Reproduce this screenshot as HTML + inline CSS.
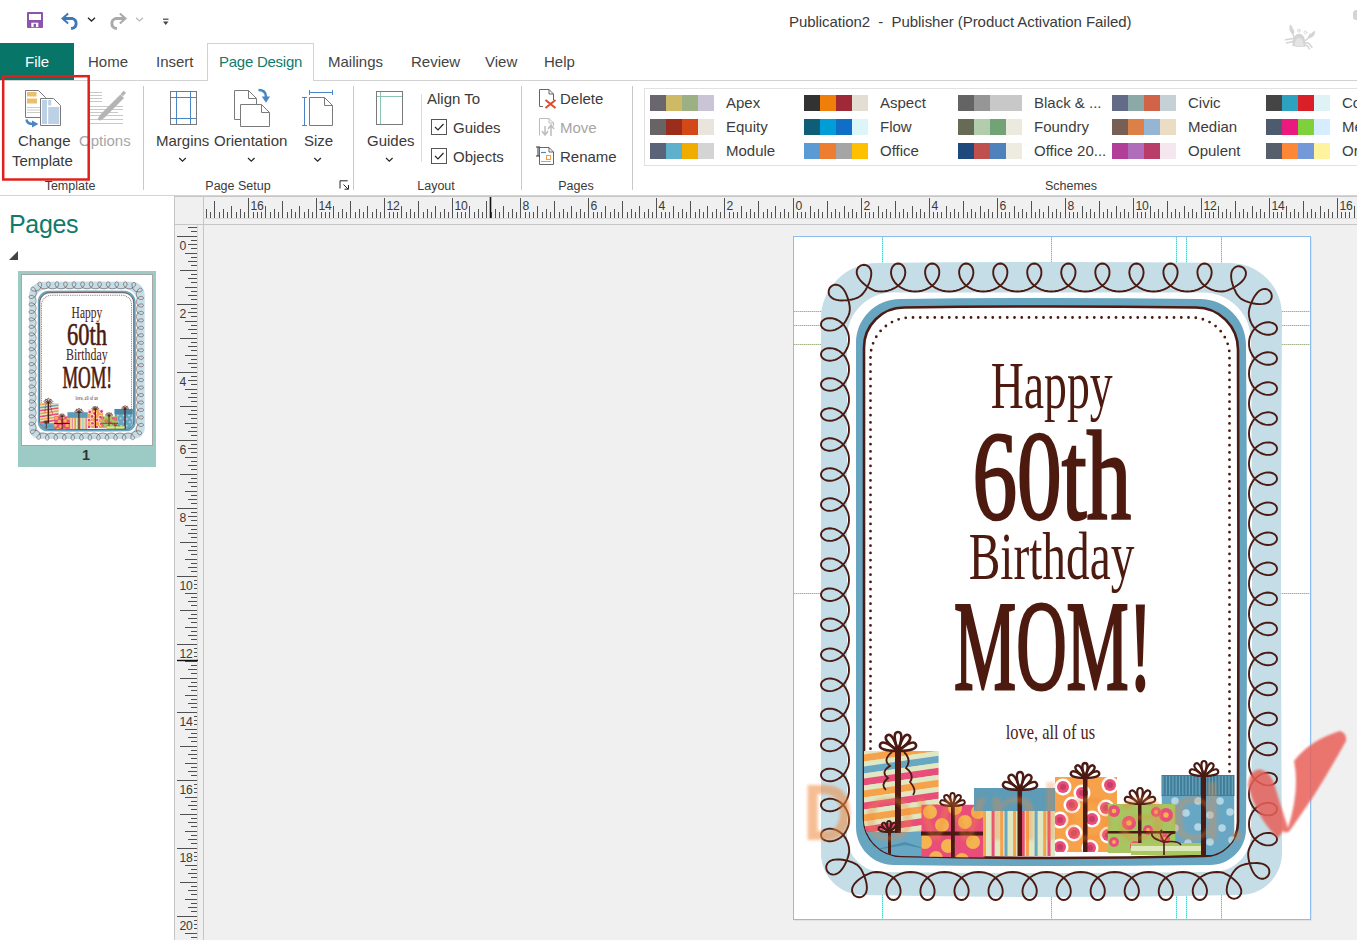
<!DOCTYPE html>
<html><head><meta charset="utf-8">
<style>
*{margin:0;padding:0;box-sizing:border-box}
html,body{width:1357px;height:940px;overflow:hidden;background:#fff;font-family:"Liberation Sans", sans-serif;color:#262626}
.a{position:absolute;white-space:nowrap}
.rb{font-size:15px;color:#3d3d3d}
.gl{font-size:12.5px;color:#3a3a3a}
</style></head><body>

<div class="a" style="left:789px;top:13px;font-size:15px;color:#3a3a3a;letter-spacing:-0.05px">Publication2&nbsp; -&nbsp; Publisher (Product Activation Failed)</div>
<div class="a" style="left:0;top:43px;width:74px;height:37px;background:#077568"></div>
<div class="a" style="left:25px;top:53px;font-size:15px;color:#fff;z-index:3">File</div>
<div class="a" style="left:207px;top:43px;width:107px;height:38px;border:1px solid #d2d2d2;border-bottom:none;background:#fff;z-index:2"></div>
<div class="a" style="left:0;top:80px;width:1357px;height:1px;background:#d2d2d2"></div>
<div class="a" style="left:88px;top:53px;font-size:15px;color:#444;z-index:3">Home</div>
<div class="a" style="left:156px;top:53px;font-size:15px;color:#444;z-index:3">Insert</div>
<div class="a" style="left:219px;top:53px;font-size:15px;color:#0f7b6c;letter-spacing:-0.25px;z-index:3">Page Design</div>
<div class="a" style="left:328px;top:53px;font-size:15px;color:#444;z-index:3">Mailings</div>
<div class="a" style="left:411px;top:53px;font-size:15px;color:#444;z-index:3">Review</div>
<div class="a" style="left:485px;top:53px;font-size:15px;color:#444;z-index:3">View</div>
<div class="a" style="left:544px;top:53px;font-size:15px;color:#444;z-index:3">Help</div>
<div class="a" style="left:0;top:195px;width:1357px;height:1px;background:#d4d4d4"></div>
<div class="a" style="left:143px;top:86px;width:1px;height:104px;background:#c8c8c8"></div>
<div class="a" style="left:353px;top:86px;width:1px;height:104px;background:#c8c8c8"></div>
<div class="a" style="left:521px;top:86px;width:1px;height:104px;background:#c8c8c8"></div>
<div class="a" style="left:632px;top:86px;width:1px;height:104px;background:#c8c8c8"></div>
<div class="a" style="left:421px;top:94px;width:1px;height:68px;background:#dcdcdc"></div>
<div class="a gl" style="left:10px;width:120px;text-align:center;top:179px">Template</div>
<div class="a gl" style="left:178px;width:120px;text-align:center;top:179px">Page Setup</div>
<div class="a gl" style="left:376px;width:120px;text-align:center;top:179px">Layout</div>
<div class="a gl" style="left:516px;width:120px;text-align:center;top:179px">Pages</div>
<div class="a gl" style="left:1011px;width:120px;text-align:center;top:179px">Schemes</div>
<div class="a rb" style="left:18px;top:132px;color:#3a3a3a">Change</div>
<div class="a rb" style="left:12px;top:152px;color:#3a3a3a">Template</div>
<div class="a rb" style="left:79px;top:132px;color:#a6a6a6">Options</div>
<div class="a rb" style="left:156px;top:132px;color:#3a3a3a">Margins</div>
<div class="a rb" style="left:214px;top:132px;color:#3a3a3a">Orientation</div>
<div class="a rb" style="left:304px;top:132px;color:#3a3a3a">Size</div>
<div class="a rb" style="left:367px;top:132px;color:#3a3a3a">Guides</div>
<div class="a rb" style="left:427px;top:90px;color:#3a3a3a">Align To</div>
<div class="a rb" style="left:453px;top:119px;color:#3a3a3a">Guides</div>
<div class="a rb" style="left:453px;top:148px;color:#3a3a3a">Objects</div>
<div class="a rb" style="left:560px;top:90px;color:#3a3a3a">Delete</div>
<div class="a rb" style="left:560px;top:119px;color:#a6a6a6">Move</div>
<div class="a rb" style="left:560px;top:148px;color:#3a3a3a">Rename</div>
<div class="a" style="left:644px;top:88px;width:720px;height:78px;border:1px solid #e1e1e1;background:#fff"></div>
<div class="a" style="left:650px;top:95px;width:16px;height:16px;background:#69676d"></div>
<div class="a" style="left:666px;top:95px;width:16px;height:16px;background:#ceb966"></div>
<div class="a" style="left:682px;top:95px;width:16px;height:16px;background:#9cb084"></div>
<div class="a" style="left:698px;top:95px;width:16px;height:16px;background:#c9c4d6"></div>
<div class="a rb" style="left:726px;top:94px">Apex</div>
<div class="a" style="left:650px;top:119px;width:16px;height:16px;background:#696464"></div>
<div class="a" style="left:666px;top:119px;width:16px;height:16px;background:#9b2d1f"></div>
<div class="a" style="left:682px;top:119px;width:16px;height:16px;background:#d34817"></div>
<div class="a" style="left:698px;top:119px;width:16px;height:16px;background:#e9e5dc"></div>
<div class="a rb" style="left:726px;top:118px">Equity</div>
<div class="a" style="left:650px;top:143px;width:16px;height:16px;background:#5a6378"></div>
<div class="a" style="left:666px;top:143px;width:16px;height:16px;background:#5eb0cc"></div>
<div class="a" style="left:682px;top:143px;width:16px;height:16px;background:#f0ad00"></div>
<div class="a" style="left:698px;top:143px;width:16px;height:16px;background:#d4d4d4"></div>
<div class="a rb" style="left:726px;top:142px">Module</div>
<div class="a" style="left:804px;top:95px;width:16px;height:16px;background:#323232"></div>
<div class="a" style="left:820px;top:95px;width:16px;height:16px;background:#f07f09"></div>
<div class="a" style="left:836px;top:95px;width:16px;height:16px;background:#9f2936"></div>
<div class="a" style="left:852px;top:95px;width:16px;height:16px;background:#e3ded1"></div>
<div class="a rb" style="left:880px;top:94px">Aspect</div>
<div class="a" style="left:804px;top:119px;width:16px;height:16px;background:#0f5e78"></div>
<div class="a" style="left:820px;top:119px;width:16px;height:16px;background:#009dd9"></div>
<div class="a" style="left:836px;top:119px;width:16px;height:16px;background:#0f6fc6"></div>
<div class="a" style="left:852px;top:119px;width:16px;height:16px;background:#dbf5f9"></div>
<div class="a rb" style="left:880px;top:118px">Flow</div>
<div class="a" style="left:804px;top:143px;width:16px;height:16px;background:#5b9bd5"></div>
<div class="a" style="left:820px;top:143px;width:16px;height:16px;background:#ed7d31"></div>
<div class="a" style="left:836px;top:143px;width:16px;height:16px;background:#a5a5a5"></div>
<div class="a" style="left:852px;top:143px;width:16px;height:16px;background:#ffc000"></div>
<div class="a rb" style="left:880px;top:142px">Office</div>
<div class="a" style="left:958px;top:95px;width:16px;height:16px;background:#646464"></div>
<div class="a" style="left:974px;top:95px;width:16px;height:16px;background:#969696"></div>
<div class="a" style="left:990px;top:95px;width:16px;height:16px;background:#c8c8c8"></div>
<div class="a" style="left:1006px;top:95px;width:16px;height:16px;background:#c8c8c8"></div>
<div class="a rb" style="left:1034px;top:94px">Black &amp; ...</div>
<div class="a" style="left:958px;top:119px;width:16px;height:16px;background:#676a55"></div>
<div class="a" style="left:974px;top:119px;width:16px;height:16px;background:#b1cdae"></div>
<div class="a" style="left:990px;top:119px;width:16px;height:16px;background:#72a376"></div>
<div class="a" style="left:1006px;top:119px;width:16px;height:16px;background:#eaebde"></div>
<div class="a rb" style="left:1034px;top:118px">Foundry</div>
<div class="a" style="left:958px;top:143px;width:16px;height:16px;background:#1f497d"></div>
<div class="a" style="left:974px;top:143px;width:16px;height:16px;background:#c0504d"></div>
<div class="a" style="left:990px;top:143px;width:16px;height:16px;background:#4f81bd"></div>
<div class="a" style="left:1006px;top:143px;width:16px;height:16px;background:#eeece1"></div>
<div class="a rb" style="left:1034px;top:142px">Office 20...</div>
<div class="a" style="left:1112px;top:95px;width:16px;height:16px;background:#646b86"></div>
<div class="a" style="left:1128px;top:95px;width:16px;height:16px;background:#8ba9a7"></div>
<div class="a" style="left:1144px;top:95px;width:16px;height:16px;background:#d16349"></div>
<div class="a" style="left:1160px;top:95px;width:16px;height:16px;background:#c5d1d7"></div>
<div class="a rb" style="left:1188px;top:94px">Civic</div>
<div class="a" style="left:1112px;top:119px;width:16px;height:16px;background:#775f55"></div>
<div class="a" style="left:1128px;top:119px;width:16px;height:16px;background:#dd8047"></div>
<div class="a" style="left:1144px;top:119px;width:16px;height:16px;background:#94b6d2"></div>
<div class="a" style="left:1160px;top:119px;width:16px;height:16px;background:#ebddc3"></div>
<div class="a rb" style="left:1188px;top:118px">Median</div>
<div class="a" style="left:1112px;top:143px;width:16px;height:16px;background:#b13f9a"></div>
<div class="a" style="left:1128px;top:143px;width:16px;height:16px;background:#b06dba"></div>
<div class="a" style="left:1144px;top:143px;width:16px;height:16px;background:#b83d68"></div>
<div class="a" style="left:1160px;top:143px;width:16px;height:16px;background:#f4e7ed"></div>
<div class="a rb" style="left:1188px;top:142px">Opulent</div>
<div class="a" style="left:1266px;top:95px;width:16px;height:16px;background:#454545"></div>
<div class="a" style="left:1282px;top:95px;width:16px;height:16px;background:#2da2bf"></div>
<div class="a" style="left:1298px;top:95px;width:16px;height:16px;background:#da1f28"></div>
<div class="a" style="left:1314px;top:95px;width:16px;height:16px;background:#dff3f6"></div>
<div class="a rb" style="left:1342px;top:94px">Concourse</div>
<div class="a" style="left:1266px;top:119px;width:16px;height:16px;background:#4e5b6f"></div>
<div class="a" style="left:1282px;top:119px;width:16px;height:16px;background:#eb1a7f"></div>
<div class="a" style="left:1298px;top:119px;width:16px;height:16px;background:#7fd13b"></div>
<div class="a" style="left:1314px;top:119px;width:16px;height:16px;background:#d6ecff"></div>
<div class="a rb" style="left:1342px;top:118px">Metro</div>
<div class="a" style="left:1266px;top:143px;width:16px;height:16px;background:#575f6d"></div>
<div class="a" style="left:1282px;top:143px;width:16px;height:16px;background:#fe8637"></div>
<div class="a" style="left:1298px;top:143px;width:16px;height:16px;background:#7598d9"></div>
<div class="a" style="left:1314px;top:143px;width:16px;height:16px;background:#fff39d"></div>
<div class="a rb" style="left:1342px;top:142px">Oriel</div>
<div class="a" style="left:9px;top:210px;font-size:25px;letter-spacing:-0.35px;color:#0f7b6c">Pages</div>
<div class="a" style="left:174px;top:196px;width:1183px;height:744px;background:#f0f0f0"></div>
<svg class="a" style="left:0;top:0" width="1357" height="940" viewBox="0 0 1357 940"><g stroke="#c6c6c6" stroke-width="1" fill="none"><line x1="174.5" y1="196" x2="174.5" y2="940"/><line x1="175" y1="196.5" x2="1357" y2="196.5"/><line x1="203.5" y1="196" x2="203.5" y2="940"/><line x1="175" y1="224.5" x2="1357" y2="224.5"/><line x1="204" y1="218.5" x2="1357" y2="218.5" stroke="#d8d8d8"/><line x1="197.5" y1="225" x2="197.5" y2="940" stroke="#d8d8d8"/></g><g stroke="#505050" stroke-width="1"><line x1="206.5" y1="209" x2="206.5" y2="218" /><line x1="210.5" y1="212" x2="210.5" y2="218" /><line x1="214.5" y1="201" x2="214.5" y2="218" /><line x1="219.5" y1="212" x2="219.5" y2="218" /><line x1="223.5" y1="209" x2="223.5" y2="218" /><line x1="227.5" y1="212" x2="227.5" y2="218" /><line x1="231.5" y1="206" x2="231.5" y2="218" /><line x1="236.5" y1="212" x2="236.5" y2="218" /><line x1="240.5" y1="209" x2="240.5" y2="218" /><line x1="244.5" y1="212" x2="244.5" y2="218" /><line x1="248.5" y1="198" x2="248.5" y2="218" /><line x1="253.5" y1="212" x2="253.5" y2="218" /><line x1="257.5" y1="212" x2="257.5" y2="218" /><line x1="261.5" y1="212" x2="261.5" y2="218" /><line x1="265.5" y1="206" x2="265.5" y2="218" /><line x1="270.5" y1="212" x2="270.5" y2="218" /><line x1="274.5" y1="209" x2="274.5" y2="218" /><line x1="278.5" y1="212" x2="278.5" y2="218" /><line x1="282.5" y1="201" x2="282.5" y2="218" /><line x1="287.5" y1="212" x2="287.5" y2="218" /><line x1="291.5" y1="209" x2="291.5" y2="218" /><line x1="295.5" y1="212" x2="295.5" y2="218" /><line x1="299.5" y1="206" x2="299.5" y2="218" /><line x1="304.5" y1="212" x2="304.5" y2="218" /><line x1="308.5" y1="209" x2="308.5" y2="218" /><line x1="312.5" y1="212" x2="312.5" y2="218" /><line x1="316.5" y1="198" x2="316.5" y2="218" /><line x1="321.5" y1="212" x2="321.5" y2="218" /><line x1="325.5" y1="212" x2="325.5" y2="218" /><line x1="329.5" y1="212" x2="329.5" y2="218" /><line x1="333.5" y1="206" x2="333.5" y2="218" /><line x1="338.5" y1="212" x2="338.5" y2="218" /><line x1="342.5" y1="209" x2="342.5" y2="218" /><line x1="346.5" y1="212" x2="346.5" y2="218" /><line x1="350.5" y1="201" x2="350.5" y2="218" /><line x1="355.5" y1="212" x2="355.5" y2="218" /><line x1="359.5" y1="209" x2="359.5" y2="218" /><line x1="363.5" y1="212" x2="363.5" y2="218" /><line x1="367.5" y1="206" x2="367.5" y2="218" /><line x1="372.5" y1="212" x2="372.5" y2="218" /><line x1="376.5" y1="209" x2="376.5" y2="218" /><line x1="380.5" y1="212" x2="380.5" y2="218" /><line x1="384.5" y1="198" x2="384.5" y2="218" /><line x1="389.5" y1="212" x2="389.5" y2="218" /><line x1="393.5" y1="212" x2="393.5" y2="218" /><line x1="397.5" y1="212" x2="397.5" y2="218" /><line x1="401.5" y1="206" x2="401.5" y2="218" /><line x1="406.5" y1="212" x2="406.5" y2="218" /><line x1="410.5" y1="209" x2="410.5" y2="218" /><line x1="414.5" y1="212" x2="414.5" y2="218" /><line x1="418.5" y1="201" x2="418.5" y2="218" /><line x1="423.5" y1="212" x2="423.5" y2="218" /><line x1="427.5" y1="209" x2="427.5" y2="218" /><line x1="431.5" y1="212" x2="431.5" y2="218" /><line x1="435.5" y1="206" x2="435.5" y2="218" /><line x1="440.5" y1="212" x2="440.5" y2="218" /><line x1="444.5" y1="209" x2="444.5" y2="218" /><line x1="448.5" y1="212" x2="448.5" y2="218" /><line x1="452.5" y1="198" x2="452.5" y2="218" /><line x1="457.5" y1="212" x2="457.5" y2="218" /><line x1="461.5" y1="212" x2="461.5" y2="218" /><line x1="465.5" y1="212" x2="465.5" y2="218" /><line x1="469.5" y1="206" x2="469.5" y2="218" /><line x1="474.5" y1="212" x2="474.5" y2="218" /><line x1="478.5" y1="209" x2="478.5" y2="218" /><line x1="482.5" y1="212" x2="482.5" y2="218" /><line x1="486.5" y1="201" x2="486.5" y2="218" /><line x1="491.5" y1="212" x2="491.5" y2="218" /><line x1="495.5" y1="209" x2="495.5" y2="218" /><line x1="499.5" y1="212" x2="499.5" y2="218" /><line x1="503.5" y1="206" x2="503.5" y2="218" /><line x1="508.5" y1="212" x2="508.5" y2="218" /><line x1="512.5" y1="209" x2="512.5" y2="218" /><line x1="516.5" y1="212" x2="516.5" y2="218" /><line x1="520.5" y1="198" x2="520.5" y2="218" /><line x1="525.5" y1="212" x2="525.5" y2="218" /><line x1="529.5" y1="212" x2="529.5" y2="218" /><line x1="533.5" y1="212" x2="533.5" y2="218" /><line x1="537.5" y1="206" x2="537.5" y2="218" /><line x1="542.5" y1="212" x2="542.5" y2="218" /><line x1="546.5" y1="209" x2="546.5" y2="218" /><line x1="550.5" y1="212" x2="550.5" y2="218" /><line x1="554.5" y1="201" x2="554.5" y2="218" /><line x1="559.5" y1="212" x2="559.5" y2="218" /><line x1="563.5" y1="209" x2="563.5" y2="218" /><line x1="567.5" y1="212" x2="567.5" y2="218" /><line x1="571.5" y1="206" x2="571.5" y2="218" /><line x1="576.5" y1="212" x2="576.5" y2="218" /><line x1="580.5" y1="209" x2="580.5" y2="218" /><line x1="584.5" y1="212" x2="584.5" y2="218" /><line x1="588.5" y1="198" x2="588.5" y2="218" /><line x1="593.5" y1="212" x2="593.5" y2="218" /><line x1="597.5" y1="212" x2="597.5" y2="218" /><line x1="601.5" y1="212" x2="601.5" y2="218" /><line x1="605.5" y1="206" x2="605.5" y2="218" /><line x1="610.5" y1="212" x2="610.5" y2="218" /><line x1="614.5" y1="209" x2="614.5" y2="218" /><line x1="618.5" y1="212" x2="618.5" y2="218" /><line x1="622.5" y1="201" x2="622.5" y2="218" /><line x1="627.5" y1="212" x2="627.5" y2="218" /><line x1="631.5" y1="209" x2="631.5" y2="218" /><line x1="635.5" y1="212" x2="635.5" y2="218" /><line x1="639.5" y1="206" x2="639.5" y2="218" /><line x1="644.5" y1="212" x2="644.5" y2="218" /><line x1="648.5" y1="209" x2="648.5" y2="218" /><line x1="652.5" y1="212" x2="652.5" y2="218" /><line x1="656.5" y1="198" x2="656.5" y2="218" /><line x1="661.5" y1="212" x2="661.5" y2="218" /><line x1="665.5" y1="212" x2="665.5" y2="218" /><line x1="669.5" y1="212" x2="669.5" y2="218" /><line x1="673.5" y1="206" x2="673.5" y2="218" /><line x1="678.5" y1="212" x2="678.5" y2="218" /><line x1="682.5" y1="209" x2="682.5" y2="218" /><line x1="686.5" y1="212" x2="686.5" y2="218" /><line x1="690.5" y1="201" x2="690.5" y2="218" /><line x1="695.5" y1="212" x2="695.5" y2="218" /><line x1="699.5" y1="209" x2="699.5" y2="218" /><line x1="703.5" y1="212" x2="703.5" y2="218" /><line x1="707.5" y1="206" x2="707.5" y2="218" /><line x1="712.5" y1="212" x2="712.5" y2="218" /><line x1="716.5" y1="209" x2="716.5" y2="218" /><line x1="720.5" y1="212" x2="720.5" y2="218" /><line x1="724.5" y1="198" x2="724.5" y2="218" /><line x1="729.5" y1="212" x2="729.5" y2="218" /><line x1="733.5" y1="212" x2="733.5" y2="218" /><line x1="737.5" y1="212" x2="737.5" y2="218" /><line x1="741.5" y1="206" x2="741.5" y2="218" /><line x1="746.5" y1="212" x2="746.5" y2="218" /><line x1="750.5" y1="209" x2="750.5" y2="218" /><line x1="754.5" y1="212" x2="754.5" y2="218" /><line x1="758.5" y1="201" x2="758.5" y2="218" /><line x1="763.5" y1="212" x2="763.5" y2="218" /><line x1="767.5" y1="209" x2="767.5" y2="218" /><line x1="771.5" y1="212" x2="771.5" y2="218" /><line x1="775.5" y1="206" x2="775.5" y2="218" /><line x1="780.5" y1="212" x2="780.5" y2="218" /><line x1="784.5" y1="209" x2="784.5" y2="218" /><line x1="788.5" y1="212" x2="788.5" y2="218" /><line x1="793.5" y1="198" x2="793.5" y2="218" /><line x1="797.5" y1="212" x2="797.5" y2="218" /><line x1="801.5" y1="212" x2="801.5" y2="218" /><line x1="805.5" y1="212" x2="805.5" y2="218" /><line x1="810.5" y1="206" x2="810.5" y2="218" /><line x1="814.5" y1="212" x2="814.5" y2="218" /><line x1="818.5" y1="209" x2="818.5" y2="218" /><line x1="822.5" y1="212" x2="822.5" y2="218" /><line x1="827.5" y1="201" x2="827.5" y2="218" /><line x1="831.5" y1="212" x2="831.5" y2="218" /><line x1="835.5" y1="209" x2="835.5" y2="218" /><line x1="839.5" y1="212" x2="839.5" y2="218" /><line x1="844.5" y1="206" x2="844.5" y2="218" /><line x1="848.5" y1="212" x2="848.5" y2="218" /><line x1="852.5" y1="209" x2="852.5" y2="218" /><line x1="856.5" y1="212" x2="856.5" y2="218" /><line x1="861.5" y1="198" x2="861.5" y2="218" /><line x1="865.5" y1="212" x2="865.5" y2="218" /><line x1="869.5" y1="212" x2="869.5" y2="218" /><line x1="873.5" y1="212" x2="873.5" y2="218" /><line x1="878.5" y1="206" x2="878.5" y2="218" /><line x1="882.5" y1="212" x2="882.5" y2="218" /><line x1="886.5" y1="209" x2="886.5" y2="218" /><line x1="890.5" y1="212" x2="890.5" y2="218" /><line x1="895.5" y1="201" x2="895.5" y2="218" /><line x1="899.5" y1="212" x2="899.5" y2="218" /><line x1="903.5" y1="209" x2="903.5" y2="218" /><line x1="907.5" y1="212" x2="907.5" y2="218" /><line x1="912.5" y1="206" x2="912.5" y2="218" /><line x1="916.5" y1="212" x2="916.5" y2="218" /><line x1="920.5" y1="209" x2="920.5" y2="218" /><line x1="924.5" y1="212" x2="924.5" y2="218" /><line x1="929.5" y1="198" x2="929.5" y2="218" /><line x1="933.5" y1="212" x2="933.5" y2="218" /><line x1="937.5" y1="212" x2="937.5" y2="218" /><line x1="941.5" y1="212" x2="941.5" y2="218" /><line x1="946.5" y1="206" x2="946.5" y2="218" /><line x1="950.5" y1="212" x2="950.5" y2="218" /><line x1="954.5" y1="209" x2="954.5" y2="218" /><line x1="958.5" y1="212" x2="958.5" y2="218" /><line x1="963.5" y1="201" x2="963.5" y2="218" /><line x1="967.5" y1="212" x2="967.5" y2="218" /><line x1="971.5" y1="209" x2="971.5" y2="218" /><line x1="975.5" y1="212" x2="975.5" y2="218" /><line x1="980.5" y1="206" x2="980.5" y2="218" /><line x1="984.5" y1="212" x2="984.5" y2="218" /><line x1="988.5" y1="209" x2="988.5" y2="218" /><line x1="992.5" y1="212" x2="992.5" y2="218" /><line x1="997.5" y1="198" x2="997.5" y2="218" /><line x1="1001.5" y1="212" x2="1001.5" y2="218" /><line x1="1005.5" y1="212" x2="1005.5" y2="218" /><line x1="1009.5" y1="212" x2="1009.5" y2="218" /><line x1="1014.5" y1="206" x2="1014.5" y2="218" /><line x1="1018.5" y1="212" x2="1018.5" y2="218" /><line x1="1022.5" y1="209" x2="1022.5" y2="218" /><line x1="1026.5" y1="212" x2="1026.5" y2="218" /><line x1="1031.5" y1="201" x2="1031.5" y2="218" /><line x1="1035.5" y1="212" x2="1035.5" y2="218" /><line x1="1039.5" y1="209" x2="1039.5" y2="218" /><line x1="1043.5" y1="212" x2="1043.5" y2="218" /><line x1="1048.5" y1="206" x2="1048.5" y2="218" /><line x1="1052.5" y1="212" x2="1052.5" y2="218" /><line x1="1056.5" y1="209" x2="1056.5" y2="218" /><line x1="1060.5" y1="212" x2="1060.5" y2="218" /><line x1="1065.5" y1="198" x2="1065.5" y2="218" /><line x1="1069.5" y1="212" x2="1069.5" y2="218" /><line x1="1073.5" y1="212" x2="1073.5" y2="218" /><line x1="1077.5" y1="212" x2="1077.5" y2="218" /><line x1="1082.5" y1="206" x2="1082.5" y2="218" /><line x1="1086.5" y1="212" x2="1086.5" y2="218" /><line x1="1090.5" y1="209" x2="1090.5" y2="218" /><line x1="1094.5" y1="212" x2="1094.5" y2="218" /><line x1="1099.5" y1="201" x2="1099.5" y2="218" /><line x1="1103.5" y1="212" x2="1103.5" y2="218" /><line x1="1107.5" y1="209" x2="1107.5" y2="218" /><line x1="1111.5" y1="212" x2="1111.5" y2="218" /><line x1="1116.5" y1="206" x2="1116.5" y2="218" /><line x1="1120.5" y1="212" x2="1120.5" y2="218" /><line x1="1124.5" y1="209" x2="1124.5" y2="218" /><line x1="1128.5" y1="212" x2="1128.5" y2="218" /><line x1="1133.5" y1="198" x2="1133.5" y2="218" /><line x1="1137.5" y1="212" x2="1137.5" y2="218" /><line x1="1141.5" y1="212" x2="1141.5" y2="218" /><line x1="1145.5" y1="212" x2="1145.5" y2="218" /><line x1="1150.5" y1="206" x2="1150.5" y2="218" /><line x1="1154.5" y1="212" x2="1154.5" y2="218" /><line x1="1158.5" y1="209" x2="1158.5" y2="218" /><line x1="1162.5" y1="212" x2="1162.5" y2="218" /><line x1="1167.5" y1="201" x2="1167.5" y2="218" /><line x1="1171.5" y1="212" x2="1171.5" y2="218" /><line x1="1175.5" y1="209" x2="1175.5" y2="218" /><line x1="1179.5" y1="212" x2="1179.5" y2="218" /><line x1="1184.5" y1="206" x2="1184.5" y2="218" /><line x1="1188.5" y1="212" x2="1188.5" y2="218" /><line x1="1192.5" y1="209" x2="1192.5" y2="218" /><line x1="1196.5" y1="212" x2="1196.5" y2="218" /><line x1="1201.5" y1="198" x2="1201.5" y2="218" /><line x1="1205.5" y1="212" x2="1205.5" y2="218" /><line x1="1209.5" y1="212" x2="1209.5" y2="218" /><line x1="1213.5" y1="212" x2="1213.5" y2="218" /><line x1="1218.5" y1="206" x2="1218.5" y2="218" /><line x1="1222.5" y1="212" x2="1222.5" y2="218" /><line x1="1226.5" y1="209" x2="1226.5" y2="218" /><line x1="1230.5" y1="212" x2="1230.5" y2="218" /><line x1="1235.5" y1="201" x2="1235.5" y2="218" /><line x1="1239.5" y1="212" x2="1239.5" y2="218" /><line x1="1243.5" y1="209" x2="1243.5" y2="218" /><line x1="1247.5" y1="212" x2="1247.5" y2="218" /><line x1="1252.5" y1="206" x2="1252.5" y2="218" /><line x1="1256.5" y1="212" x2="1256.5" y2="218" /><line x1="1260.5" y1="209" x2="1260.5" y2="218" /><line x1="1264.5" y1="212" x2="1264.5" y2="218" /><line x1="1269.5" y1="198" x2="1269.5" y2="218" /><line x1="1273.5" y1="212" x2="1273.5" y2="218" /><line x1="1277.5" y1="212" x2="1277.5" y2="218" /><line x1="1281.5" y1="212" x2="1281.5" y2="218" /><line x1="1286.5" y1="206" x2="1286.5" y2="218" /><line x1="1290.5" y1="212" x2="1290.5" y2="218" /><line x1="1294.5" y1="209" x2="1294.5" y2="218" /><line x1="1298.5" y1="212" x2="1298.5" y2="218" /><line x1="1303.5" y1="201" x2="1303.5" y2="218" /><line x1="1307.5" y1="212" x2="1307.5" y2="218" /><line x1="1311.5" y1="209" x2="1311.5" y2="218" /><line x1="1315.5" y1="212" x2="1315.5" y2="218" /><line x1="1320.5" y1="206" x2="1320.5" y2="218" /><line x1="1324.5" y1="212" x2="1324.5" y2="218" /><line x1="1328.5" y1="209" x2="1328.5" y2="218" /><line x1="1332.5" y1="212" x2="1332.5" y2="218" /><line x1="1337.5" y1="198" x2="1337.5" y2="218" /><line x1="1341.5" y1="212" x2="1341.5" y2="218" /><line x1="1345.5" y1="212" x2="1345.5" y2="218" /><line x1="1349.5" y1="212" x2="1349.5" y2="218" /><line x1="1354.5" y1="206" x2="1354.5" y2="218" /><line x1="188" y1="227.5" x2="197" y2="227.5" /><line x1="191" y1="231.5" x2="197" y2="231.5" /><line x1="177" y1="236.5" x2="197" y2="236.5" /><line x1="191" y1="240.5" x2="197" y2="240.5" /><line x1="188" y1="244.5" x2="197" y2="244.5" /><line x1="191" y1="248.5" x2="197" y2="248.5" /><line x1="185" y1="253.5" x2="197" y2="253.5" /><line x1="191" y1="257.5" x2="197" y2="257.5" /><line x1="188" y1="261.5" x2="197" y2="261.5" /><line x1="191" y1="265.5" x2="197" y2="265.5" /><line x1="180" y1="270.5" x2="197" y2="270.5" /><line x1="191" y1="274.5" x2="197" y2="274.5" /><line x1="188" y1="278.5" x2="197" y2="278.5" /><line x1="191" y1="282.5" x2="197" y2="282.5" /><line x1="185" y1="287.5" x2="197" y2="287.5" /><line x1="191" y1="291.5" x2="197" y2="291.5" /><line x1="188" y1="295.5" x2="197" y2="295.5" /><line x1="191" y1="299.5" x2="197" y2="299.5" /><line x1="177" y1="304.5" x2="197" y2="304.5" /><line x1="191" y1="308.5" x2="197" y2="308.5" /><line x1="188" y1="312.5" x2="197" y2="312.5" /><line x1="191" y1="316.5" x2="197" y2="316.5" /><line x1="185" y1="321.5" x2="197" y2="321.5" /><line x1="191" y1="325.5" x2="197" y2="325.5" /><line x1="188" y1="329.5" x2="197" y2="329.5" /><line x1="191" y1="333.5" x2="197" y2="333.5" /><line x1="180" y1="338.5" x2="197" y2="338.5" /><line x1="191" y1="342.5" x2="197" y2="342.5" /><line x1="188" y1="346.5" x2="197" y2="346.5" /><line x1="191" y1="350.5" x2="197" y2="350.5" /><line x1="185" y1="355.5" x2="197" y2="355.5" /><line x1="191" y1="359.5" x2="197" y2="359.5" /><line x1="188" y1="363.5" x2="197" y2="363.5" /><line x1="191" y1="367.5" x2="197" y2="367.5" /><line x1="177" y1="372.5" x2="197" y2="372.5" /><line x1="191" y1="376.5" x2="197" y2="376.5" /><line x1="188" y1="380.5" x2="197" y2="380.5" /><line x1="191" y1="384.5" x2="197" y2="384.5" /><line x1="185" y1="389.5" x2="197" y2="389.5" /><line x1="191" y1="393.5" x2="197" y2="393.5" /><line x1="188" y1="397.5" x2="197" y2="397.5" /><line x1="191" y1="401.5" x2="197" y2="401.5" /><line x1="180" y1="406.5" x2="197" y2="406.5" /><line x1="191" y1="410.5" x2="197" y2="410.5" /><line x1="188" y1="414.5" x2="197" y2="414.5" /><line x1="191" y1="418.5" x2="197" y2="418.5" /><line x1="185" y1="423.5" x2="197" y2="423.5" /><line x1="191" y1="427.5" x2="197" y2="427.5" /><line x1="188" y1="431.5" x2="197" y2="431.5" /><line x1="191" y1="435.5" x2="197" y2="435.5" /><line x1="177" y1="440.5" x2="197" y2="440.5" /><line x1="191" y1="444.5" x2="197" y2="444.5" /><line x1="188" y1="448.5" x2="197" y2="448.5" /><line x1="191" y1="452.5" x2="197" y2="452.5" /><line x1="185" y1="457.5" x2="197" y2="457.5" /><line x1="191" y1="461.5" x2="197" y2="461.5" /><line x1="188" y1="465.5" x2="197" y2="465.5" /><line x1="191" y1="469.5" x2="197" y2="469.5" /><line x1="180" y1="474.5" x2="197" y2="474.5" /><line x1="191" y1="478.5" x2="197" y2="478.5" /><line x1="188" y1="482.5" x2="197" y2="482.5" /><line x1="191" y1="486.5" x2="197" y2="486.5" /><line x1="185" y1="491.5" x2="197" y2="491.5" /><line x1="191" y1="495.5" x2="197" y2="495.5" /><line x1="188" y1="499.5" x2="197" y2="499.5" /><line x1="191" y1="503.5" x2="197" y2="503.5" /><line x1="177" y1="508.5" x2="197" y2="508.5" /><line x1="191" y1="512.5" x2="197" y2="512.5" /><line x1="188" y1="516.5" x2="197" y2="516.5" /><line x1="191" y1="520.5" x2="197" y2="520.5" /><line x1="185" y1="525.5" x2="197" y2="525.5" /><line x1="191" y1="529.5" x2="197" y2="529.5" /><line x1="188" y1="533.5" x2="197" y2="533.5" /><line x1="191" y1="537.5" x2="197" y2="537.5" /><line x1="180" y1="542.5" x2="197" y2="542.5" /><line x1="191" y1="546.5" x2="197" y2="546.5" /><line x1="188" y1="550.5" x2="197" y2="550.5" /><line x1="191" y1="554.5" x2="197" y2="554.5" /><line x1="185" y1="559.5" x2="197" y2="559.5" /><line x1="191" y1="563.5" x2="197" y2="563.5" /><line x1="188" y1="567.5" x2="197" y2="567.5" /><line x1="191" y1="571.5" x2="197" y2="571.5" /><line x1="177" y1="576.5" x2="197" y2="576.5" /><line x1="194" y1="580.5" x2="197" y2="580.5" /><line x1="194" y1="584.5" x2="197" y2="584.5" /><line x1="194" y1="588.5" x2="197" y2="588.5" /><line x1="185" y1="593.5" x2="197" y2="593.5" /><line x1="191" y1="597.5" x2="197" y2="597.5" /><line x1="188" y1="601.5" x2="197" y2="601.5" /><line x1="191" y1="605.5" x2="197" y2="605.5" /><line x1="180" y1="610.5" x2="197" y2="610.5" /><line x1="191" y1="614.5" x2="197" y2="614.5" /><line x1="188" y1="618.5" x2="197" y2="618.5" /><line x1="191" y1="622.5" x2="197" y2="622.5" /><line x1="185" y1="627.5" x2="197" y2="627.5" /><line x1="191" y1="631.5" x2="197" y2="631.5" /><line x1="188" y1="635.5" x2="197" y2="635.5" /><line x1="191" y1="639.5" x2="197" y2="639.5" /><line x1="177" y1="644.5" x2="197" y2="644.5" /><line x1="194" y1="648.5" x2="197" y2="648.5" /><line x1="194" y1="652.5" x2="197" y2="652.5" /><line x1="194" y1="656.5" x2="197" y2="656.5" /><line x1="185" y1="661.5" x2="197" y2="661.5" /><line x1="191" y1="665.5" x2="197" y2="665.5" /><line x1="188" y1="669.5" x2="197" y2="669.5" /><line x1="191" y1="673.5" x2="197" y2="673.5" /><line x1="180" y1="678.5" x2="197" y2="678.5" /><line x1="191" y1="682.5" x2="197" y2="682.5" /><line x1="188" y1="686.5" x2="197" y2="686.5" /><line x1="191" y1="690.5" x2="197" y2="690.5" /><line x1="185" y1="695.5" x2="197" y2="695.5" /><line x1="191" y1="699.5" x2="197" y2="699.5" /><line x1="188" y1="703.5" x2="197" y2="703.5" /><line x1="191" y1="707.5" x2="197" y2="707.5" /><line x1="177" y1="712.5" x2="197" y2="712.5" /><line x1="194" y1="716.5" x2="197" y2="716.5" /><line x1="194" y1="720.5" x2="197" y2="720.5" /><line x1="194" y1="724.5" x2="197" y2="724.5" /><line x1="185" y1="729.5" x2="197" y2="729.5" /><line x1="191" y1="733.5" x2="197" y2="733.5" /><line x1="188" y1="737.5" x2="197" y2="737.5" /><line x1="191" y1="741.5" x2="197" y2="741.5" /><line x1="180" y1="746.5" x2="197" y2="746.5" /><line x1="191" y1="750.5" x2="197" y2="750.5" /><line x1="188" y1="754.5" x2="197" y2="754.5" /><line x1="191" y1="758.5" x2="197" y2="758.5" /><line x1="185" y1="763.5" x2="197" y2="763.5" /><line x1="191" y1="767.5" x2="197" y2="767.5" /><line x1="188" y1="771.5" x2="197" y2="771.5" /><line x1="191" y1="775.5" x2="197" y2="775.5" /><line x1="177" y1="780.5" x2="197" y2="780.5" /><line x1="194" y1="784.5" x2="197" y2="784.5" /><line x1="194" y1="788.5" x2="197" y2="788.5" /><line x1="194" y1="792.5" x2="197" y2="792.5" /><line x1="185" y1="797.5" x2="197" y2="797.5" /><line x1="191" y1="801.5" x2="197" y2="801.5" /><line x1="188" y1="805.5" x2="197" y2="805.5" /><line x1="191" y1="809.5" x2="197" y2="809.5" /><line x1="180" y1="814.5" x2="197" y2="814.5" /><line x1="191" y1="818.5" x2="197" y2="818.5" /><line x1="188" y1="822.5" x2="197" y2="822.5" /><line x1="191" y1="826.5" x2="197" y2="826.5" /><line x1="185" y1="831.5" x2="197" y2="831.5" /><line x1="191" y1="835.5" x2="197" y2="835.5" /><line x1="188" y1="839.5" x2="197" y2="839.5" /><line x1="191" y1="843.5" x2="197" y2="843.5" /><line x1="177" y1="848.5" x2="197" y2="848.5" /><line x1="194" y1="852.5" x2="197" y2="852.5" /><line x1="194" y1="856.5" x2="197" y2="856.5" /><line x1="194" y1="860.5" x2="197" y2="860.5" /><line x1="185" y1="865.5" x2="197" y2="865.5" /><line x1="191" y1="869.5" x2="197" y2="869.5" /><line x1="188" y1="873.5" x2="197" y2="873.5" /><line x1="191" y1="877.5" x2="197" y2="877.5" /><line x1="180" y1="882.5" x2="197" y2="882.5" /><line x1="191" y1="886.5" x2="197" y2="886.5" /><line x1="188" y1="890.5" x2="197" y2="890.5" /><line x1="191" y1="894.5" x2="197" y2="894.5" /><line x1="185" y1="899.5" x2="197" y2="899.5" /><line x1="191" y1="903.5" x2="197" y2="903.5" /><line x1="188" y1="907.5" x2="197" y2="907.5" /><line x1="191" y1="911.5" x2="197" y2="911.5" /><line x1="177" y1="916.5" x2="197" y2="916.5" /><line x1="194" y1="920.5" x2="197" y2="920.5" /><line x1="194" y1="924.5" x2="197" y2="924.5" /><line x1="194" y1="928.5" x2="197" y2="928.5" /><line x1="185" y1="933.5" x2="197" y2="933.5" /><line x1="191" y1="937.5" x2="197" y2="937.5" /></g><g font-family='"Liberation Sans", sans-serif' font-size="12.2" letter-spacing="-0.4" fill="#3a3a3a"><text x="250.5" y="209.8">16</text><text x="318.5" y="209.8">14</text><text x="386.5" y="209.8">12</text><text x="454.5" y="209.8">10</text><text x="522.5" y="209.8">8</text><text x="590.5" y="209.8">6</text><text x="658.5" y="209.8">4</text><text x="726.5" y="209.8">2</text><text x="795.5" y="209.8">0</text><text x="863.5" y="209.8">2</text><text x="931.5" y="209.8">4</text><text x="999.5" y="209.8">6</text><text x="1067.5" y="209.8">8</text><text x="1135.5" y="209.8">10</text><text x="1203.5" y="209.8">12</text><text x="1271.5" y="209.8">14</text><text x="1339.5" y="209.8">16</text><text x="179.5" y="250">0</text><text x="179.5" y="318">2</text><text x="179.5" y="386">4</text><text x="179.5" y="454">6</text><text x="179.5" y="522">8</text><text x="179.5" y="590">10</text><text x="179.5" y="658">12</text><text x="179.5" y="726">14</text><text x="179.5" y="794">16</text><text x="179.5" y="862">18</text><text x="179.5" y="930">20</text></g><line x1="490.5" y1="197" x2="490.5" y2="218" stroke="#111" stroke-width="1.6"/><line x1="177" y1="660.5" x2="198" y2="660.5" stroke="#111" stroke-width="1.4"/></svg>
<svg class="a" style="left:793px;top:236px;overflow:visible;z-index:4" width="518" height="684" viewBox="793 236 518 684"><rect x="793" y="236" width="518" height="684" fill="#fff"/><path d="M1311.5 237 V920.5 H794" fill="none" stroke="#e2e2e2" stroke-width="1"/><rect x="793.5" y="236.5" width="517" height="683" fill="none" stroke="#8cf2f2" stroke-width="1"/><rect x="793.5" y="236.5" width="517" height="683" fill="none" stroke="#8f86ec" stroke-width="1" stroke-dasharray="1 1"/><g stroke="#8ef5f0" stroke-width="1"><line x1="882.5" y1="237" x2="882.5" y2="919"/><line x1="1051.5" y1="237" x2="1051.5" y2="919"/><line x1="1176.5" y1="237" x2="1176.5" y2="919"/><line x1="1186.5" y1="237" x2="1186.5" y2="919"/><line x1="1221.5" y1="237" x2="1221.5" y2="919"/><line x1="794" y1="311.5" x2="1310" y2="311.5"/><line x1="794" y1="325.5" x2="1310" y2="325.5"/><line x1="794" y1="344.5" x2="1310" y2="344.5"/><line x1="794" y1="593.5" x2="1310" y2="593.5"/></g><g stroke="#a0b48a" stroke-width="1" stroke-dasharray="1 1"><line x1="882.5" y1="237" x2="882.5" y2="919"/><line x1="1051.5" y1="237" x2="1051.5" y2="919"/><line x1="1176.5" y1="237" x2="1176.5" y2="919"/><line x1="1186.5" y1="237" x2="1186.5" y2="919"/><line x1="1221.5" y1="237" x2="1221.5" y2="919"/><line x1="794" y1="311.5" x2="1310" y2="311.5"/><line x1="794" y1="325.5" x2="1310" y2="325.5"/><line x1="794" y1="344.5" x2="1310" y2="344.5"/><line x1="794" y1="593.5" x2="1310" y2="593.5"/></g><g id="art"><path fill="#c5dde6" d="M821,319C821,288.0712 846.0712,263 877,263Q1053.5,261 1230,263C1258.7196,263 1282,286.2804 1282,315Q1280,584.0 1282,853C1282,876.1966 1263.1966,895 1240,895Q1051.5,899 863,895C839.8034,895 821,876.1966 821,853Q821,586.0 821,319Z"/><path fill="#fff" d="M847,338.5C847,313.0942 867.5942,292.5 893,292.5Q1048.0,292.5 1203,292.5C1229.5104,292.5 1251,313.9896 1251,340.5Q1253,587.25 1251,834C1251,854.9874 1233.9874,872 1213,872Q1048.0,874 883,872C863.1172,872 847,855.8828 847,836Q847,587.25 847,338.5Z"/><path fill="#68a5c0" d="M856,343C856,318.6988 875.6988,299 900,299Q1050.0,297 1200,299C1225.4058,299 1246,319.5942 1246,345Q1248,587.0 1246,829C1246,848.8828 1229.8828,865 1210,865Q1052.0,867 894,865C873.0126,865 856,847.9874 856,827Q856,585.0 856,343Z"/><path fill="#fff" stroke="#4b1a12" stroke-width="2.6" d="M864,347.5C864,325.408 881.908,307.5 904,307.5Q1050.0,305.5 1196,307.5C1219.1966,307.5 1238,326.3034 1238,349.5Q1239.0,585.75 1238,822C1238,840.7782 1222.7782,856 1204,856Q1053.0,860 902,856C881.0126,856 864,838.9874 864,818Q864,582.75 864,347.5Z"/><path fill="none" stroke="#4b1a12" stroke-width="2.8" stroke-linecap="round" stroke-dasharray="0 7.25" d="M870.5,357.5C870.5,335.408 888.408,317.5 910.5,317.5Q1051.0,317.5 1191.5,317.5C1212.4874,317.5 1229.5,334.5126 1229.5,355.5Q1229.5,582.75 1229.5,810C1229.5,826.569 1216.069,840 1199.5,840Q1050.0,840 900.5,840C883.931,840 870.5,826.569 870.5,810Q870.5,583.75 870.5,357.5Z"/><g fill="none" stroke="#4b1a12" stroke-width="1.9" stroke-linejoin="round"><path d="M898.1,263.5 L896.6,263.7 L895.0,264.3 L893.7,265.4 L892.5,266.8 L891.7,268.5 L891.2,270.5 L891.0,272.7 L891.3,275.1 L892.0,277.5 L893.2,279.9 L894.8,282.3 L896.8,284.5 L899.2,286.5 L902.0,288.2 L905.0,289.6 L908.3,290.7 L911.7,291.3 L915.2,291.5 L918.7,291.3 L922.1,290.7 L925.3,289.6 L928.4,288.2 L931.1,286.5 L933.5,284.5 L935.5,282.3 L937.1,279.9 L938.3,277.5 L939.0,275.1 L939.3,272.7 L939.2,270.5 L938.7,268.5 L937.8,266.8 L936.7,265.4 L935.3,264.3 L933.8,263.7 L932.2,263.5 L930.6,263.7 L929.1,264.3 L927.7,265.4 L926.6,266.8 L925.7,268.5 L925.2,270.5 L925.1,272.7 L925.4,275.1 L926.1,277.5 L927.2,279.9 L928.8,282.3 L930.9,284.5 L933.3,286.5 L936.0,288.2 L939.1,289.6 L942.3,290.7 L945.7,291.3 L949.2,291.5 L952.7,291.3 L956.1,290.7 L959.4,289.6 L962.4,288.2 L965.1,286.5 L967.6,284.5 L969.6,282.3 L971.2,279.9 L972.4,277.5 L973.1,275.1 L973.4,272.7 L973.2,270.5 L972.7,268.5 L971.9,266.8 L970.7,265.4 L969.3,264.3 L967.8,263.7 L966.2,263.5 L964.6,263.7 L963.1,264.3 L961.8,265.4 L960.6,266.8 L959.8,268.5 L959.2,270.5 L959.1,272.7 L959.4,275.1 L960.1,277.5 L961.3,279.9 L962.9,282.3 L964.9,284.5 L967.3,286.5 L970.1,288.2 L973.1,289.6 L976.4,290.7 L979.8,291.3 L983.3,291.5 L986.7,291.3 L990.2,290.7 L993.4,289.6 L996.4,288.2 L999.2,286.5 L1001.6,284.5 L1003.6,282.3 L1005.2,279.9 L1006.4,277.5 L1007.1,275.1 L1007.4,272.7 L1007.3,270.5 L1006.8,268.5 L1005.9,266.8 L1004.8,265.4 L1003.4,264.3 L1001.9,263.7 L1000.3,263.5 L998.7,263.7 L997.2,264.3 L995.8,265.4 L994.7,266.8 L993.8,268.5 L993.3,270.5 L993.2,272.7 L993.4,275.1 L994.2,277.5 L995.3,279.9 L996.9,282.3 L999.0,284.5 L1001.4,286.5 L1004.1,288.2 L1007.1,289.6 L1010.4,290.7 L1013.8,291.3 L1017.3,291.5 L1020.8,291.3 L1024.2,290.7 L1027.5,289.6 L1030.5,288.2 L1033.2,286.5 L1035.6,284.5 L1037.7,282.3 L1039.3,279.9 L1040.4,277.5 L1041.2,275.1 L1041.4,272.7 L1041.3,270.5 L1040.8,268.5 L1039.9,266.8 L1038.8,265.4 L1037.4,264.3 L1035.9,263.7 L1034.3,263.5 L1032.7,263.7 L1031.2,264.3 L1029.8,265.4 L1028.7,266.8 L1027.8,268.5 L1027.3,270.5 L1027.2,272.7 L1027.5,275.1 L1028.2,277.5 L1029.4,279.9 L1031.0,282.3 L1033.0,284.5 L1035.4,286.5 L1038.2,288.2 L1041.2,289.6 L1044.4,290.7 L1047.9,291.3 L1051.3,291.5 L1054.8,291.3 L1058.2,290.7 L1061.5,289.6 L1064.5,288.2 L1067.3,286.5 L1069.7,284.5 L1071.7,282.3 L1073.3,279.9 L1074.5,277.5 L1075.2,275.1 L1075.5,272.7 L1075.4,270.5 L1074.8,268.5 L1074.0,266.8 L1072.8,265.4 L1071.5,264.3 L1070.0,263.7 L1068.4,263.5 L1066.8,263.7 L1065.3,264.3 L1063.9,265.4 L1062.7,266.8 L1061.9,268.5 L1061.4,270.5 L1061.2,272.7 L1061.5,275.1 L1062.2,277.5 L1063.4,279.9 L1065.0,282.3 L1067.0,284.5 L1069.5,286.5 L1072.2,288.2 L1075.2,289.6 L1078.5,290.7 L1081.9,291.3 L1085.4,291.5 L1088.9,291.3 L1092.3,290.7 L1095.5,289.6 L1098.6,288.2 L1101.3,286.5 L1103.7,284.5 L1105.8,282.3 L1107.4,279.9 L1108.5,277.5 L1109.3,275.1 L1109.5,272.7 L1109.4,270.5 L1108.9,268.5 L1108.0,266.8 L1106.9,265.4 L1105.5,264.3 L1104.0,263.7 L1102.4,263.5 L1100.8,263.7 L1099.3,264.3 L1097.9,265.4 L1096.8,266.8 L1095.9,268.5 L1095.4,270.5 L1095.3,272.7 L1095.6,275.1 L1096.3,277.5 L1097.5,279.9 L1099.1,282.3 L1101.1,284.5 L1103.5,286.5 L1106.2,288.2 L1109.3,289.6 L1112.5,290.7 L1115.9,291.3 L1119.4,291.5 L1122.9,291.3 L1126.3,290.7 L1129.6,289.6 L1132.6,288.2 L1135.4,286.5 L1137.8,284.5 L1139.8,282.3 L1141.4,279.9 L1142.6,277.5 L1143.3,275.1 L1143.6,272.7 L1143.4,270.5 L1142.9,268.5 L1142.1,266.8 L1140.9,265.4 L1139.6,264.3 L1138.0,263.7 L1136.5,263.5 L1134.9,263.7 L1133.3,264.3 L1132.0,265.4 L1130.8,266.8 L1130.0,268.5 L1129.5,270.5 L1129.3,272.7 L1129.6,275.1 L1130.3,277.5 L1131.5,279.9 L1133.1,282.3 L1135.1,284.5 L1137.5,286.5 L1140.3,288.2 L1143.3,289.6 L1146.6,290.7 L1150.0,291.3 L1153.5,291.5 L1157.0,291.3 L1160.4,290.7 L1163.6,289.6 L1166.7,288.2 L1169.4,286.5 L1171.8,284.5 L1173.8,282.3 L1175.4,279.9 L1176.6,277.5 L1177.3,275.1 L1177.6,272.7 L1177.5,270.5 L1177.0,268.5 L1176.1,266.8 L1175.0,265.4 L1173.6,264.3 L1172.1,263.7 L1170.5,263.5 L1168.9,263.7 L1167.4,264.3 L1166.0,265.4 L1164.9,266.8 L1164.0,268.5 L1163.5,270.5 L1163.4,272.7 L1163.7,275.1 L1164.4,277.5 L1165.5,279.9 L1167.2,282.3 L1169.2,284.5 L1171.6,286.5 L1174.3,288.2 L1177.4,289.6 L1180.6,290.7 L1184.0,291.3 L1187.5,291.5 L1191.0,291.3 L1194.4,290.7 L1197.7,289.6 L1200.7,288.2 L1203.5,286.5 L1205.9,284.5 L1207.9,282.3 L1209.5,279.9 L1210.7,277.5 L1211.4,275.1 L1211.7,272.7 L1211.5,270.5 L1211.0,268.5 L1210.2,266.8 L1209.0,265.4 L1207.7,264.3 L1206.1,263.7 L1204.5,263.5 L1202.9,263.7 L1201.4,264.3 L1200.1,265.4 L1198.9,266.8 L1198.1,268.5 L1197.5,270.5 L1197.4,272.7 L1197.7,275.1 L1198.4,277.5 L1199.6,279.9 L1201.2,282.3 L1203.2,284.5 L1205.6,286.5 L1208.4,288.2 L1211.4,289.6 L1214.7,290.7 L1218.1,291.3 L1221.6,291.5 L1224.2,291.3 L1226.2,290.8 L1228.3,290.1 L1230.5,289.2 L1232.7,288.1 L1235.0,286.8 L1237.3,285.3 L1239.4,283.7 L1241.4,282.0 L1243.1,280.2 L1244.5,278.2 L1245.5,276.2 L1245.9,274.2 L1245.9,272.2 L1245.3,270.4 L1244.3,268.8 L1242.9,267.5 L1241.2,266.7 L1239.3,266.3 L1237.4,266.3 L1235.6,266.9 L1234.1,268.0 L1232.8,269.5 L1231.8,271.3 L1231.3,273.5 L1231.1,275.9 L1231.3,278.4 L1231.7,281.0 L1232.4,283.6 L1233.2,286.1 L1234.1,288.6 L1235.2,290.9 L1236.2,293.0 L1237.4,294.9 L1238.7,296.5 L1240.1,297.9 L1241.7,299.2 L1243.5,300.2 L1245.6,301.1 L1247.8,301.9 L1250.2,302.6 L1252.8,303.2 L1255.4,303.7 L1258.1,304.0 L1260.7,304.1 L1263.2,303.9 L1265.5,303.5 L1267.6,302.6 L1269.3,301.5 L1270.6,300.0 L1271.5,298.3 L1271.8,296.4 L1271.6,294.5 L1271.0,292.8 L1269.9,291.2 L1268.5,290.0 L1266.7,289.2 L1264.9,288.9 L1262.9,289.1 L1261.0,289.8 L1259.1,291.0 L1257.4,292.6 L1255.8,294.6 L1254.3,296.7 L1253.0,299.1 L1251.9,301.5 L1250.9,304.0 L1250.1,306.3 L1249.4,308.6 L1249.0,310.8 L1248.8,312.9 L1248.9,314.9 L1249.2,316.9 L1249.8,319.6 L1250.9,322.4 L1252.3,325.1 L1254.0,327.5 L1256.0,329.7 L1258.2,331.4 L1260.6,332.9 L1263.0,333.9 L1265.4,334.5 L1267.8,334.8 L1270.0,334.7 L1272.0,334.2 L1273.7,333.5 L1275.1,332.4 L1276.2,331.2 L1276.8,329.9 L1277.0,328.5 L1276.8,327.1 L1276.2,325.7 L1275.1,324.5 L1273.7,323.5 L1272.0,322.8 L1270.0,322.3 L1267.8,322.2 L1265.4,322.5 L1263.0,323.1 L1260.6,324.1 L1258.2,325.5 L1256.0,327.3 L1254.0,329.5 L1252.3,331.9 L1250.9,334.6 L1249.8,337.4 L1249.2,340.4 L1249.0,343.5 L1249.2,346.6 L1249.8,349.6 L1250.9,352.5 L1252.3,355.1 L1254.0,357.6 L1256.0,359.7 L1258.2,361.5 L1260.6,362.9 L1263.0,363.9 L1265.4,364.6 L1267.8,364.8 L1270.0,364.7 L1272.0,364.2 L1273.7,363.5 L1275.1,362.5 L1276.2,361.3 L1276.8,359.9 L1277.0,358.5 L1276.8,357.1 L1276.2,355.8 L1275.1,354.6 L1273.7,353.6 L1272.0,352.8 L1270.0,352.4 L1267.8,352.2 L1265.4,352.5 L1263.0,353.1 L1260.6,354.2 L1258.2,355.6 L1256.0,357.4 L1254.0,359.5 L1252.3,361.9 L1250.9,364.6 L1249.8,367.5 L1249.2,370.5 L1249.0,373.6 L1249.2,376.6 L1249.8,379.6 L1250.9,382.5 L1252.3,385.2 L1254.0,387.6 L1256.0,389.7 L1258.2,391.5 L1260.6,392.9 L1263.0,394.0 L1265.4,394.6 L1267.8,394.9 L1270.0,394.7 L1272.0,394.3 L1273.7,393.5 L1275.1,392.5 L1276.2,391.3 L1276.8,390.0 L1277.0,388.6 L1276.8,387.2 L1276.2,385.8 L1275.1,384.6 L1273.7,383.6 L1272.0,382.9 L1270.0,382.4 L1267.8,382.3 L1265.4,382.5 L1263.0,383.2 L1260.6,384.2 L1258.2,385.6 L1256.0,387.4 L1254.0,389.5 L1252.3,392.0 L1250.9,394.6 L1249.8,397.5 L1249.2,400.5 L1249.0,403.6 L1249.2,406.7 L1249.8,409.7 L1250.9,412.5 L1252.3,415.2 L1254.0,417.6 L1256.0,419.8 L1258.2,421.6 L1260.6,423.0 L1263.0,424.0 L1265.4,424.6 L1267.8,424.9 L1270.0,424.8 L1272.0,424.3 L1273.7,423.6 L1275.1,422.6 L1276.2,421.4 L1276.8,420.0 L1277.0,418.6 L1276.8,417.2 L1276.2,415.9 L1275.1,414.7 L1273.7,413.6 L1272.0,412.9 L1270.0,412.4 L1267.8,412.3 L1265.4,412.6 L1263.0,413.2 L1260.6,414.2 L1258.2,415.7 L1256.0,417.4 L1254.0,419.6 L1252.3,422.0 L1250.9,424.7 L1249.8,427.5 L1249.2,430.6 L1249.0,433.6 L1249.2,436.7 L1249.8,439.7 L1250.9,442.6 L1252.3,445.3 L1254.0,447.7 L1256.0,449.8 L1258.2,451.6 L1260.6,453.0 L1263.0,454.0 L1265.4,454.7 L1267.8,454.9 L1270.0,454.8 L1272.0,454.4 L1273.7,453.6 L1275.1,452.6 L1276.2,451.4 L1276.8,450.1 L1277.0,448.6 L1276.8,447.2 L1276.2,445.9 L1275.1,444.7 L1273.7,443.7 L1272.0,442.9 L1270.0,442.5 L1267.8,442.4 L1265.4,442.6 L1263.0,443.2 L1260.6,444.3 L1258.2,445.7 L1256.0,447.5 L1254.0,449.6 L1252.3,452.0 L1250.9,454.7 L1249.8,457.6 L1249.2,460.6 L1249.0,463.7 L1249.2,466.7 L1249.8,469.7 L1250.9,472.6 L1252.3,475.3 L1254.0,477.7 L1256.0,479.9 L1258.2,481.6 L1260.6,483.1 L1263.0,484.1 L1265.4,484.7 L1267.8,485.0 L1270.0,484.9 L1272.0,484.4 L1273.7,483.6 L1275.1,482.6 L1276.2,481.4 L1276.8,480.1 L1277.0,478.7 L1276.8,477.3 L1276.2,475.9 L1275.1,474.7 L1273.7,473.7 L1272.0,473.0 L1270.0,472.5 L1267.8,472.4 L1265.4,472.6 L1263.0,473.3 L1260.6,474.3 L1258.2,475.7 L1256.0,477.5 L1254.0,479.6 L1252.3,482.1 L1250.9,484.7 L1249.8,487.6 L1249.2,490.6 L1249.0,493.7 L1249.2,496.8 L1249.8,499.8 L1250.9,502.7 L1252.3,505.3 L1254.0,507.8 L1256.0,509.9 L1258.2,511.7 L1260.6,513.1 L1263.0,514.1 L1265.4,514.8 L1267.8,515.0 L1270.0,514.9 L1272.0,514.4 L1273.7,513.7 L1275.1,512.7 L1276.2,511.5 L1276.8,510.1 L1277.0,508.7 L1276.8,507.3 L1276.2,506.0 L1275.1,504.8 L1273.7,503.8 L1272.0,503.0 L1270.0,502.6 L1267.8,502.4 L1265.4,502.7 L1263.0,503.3 L1260.6,504.4 L1258.2,505.8 L1256.0,507.6 L1254.0,509.7 L1252.3,512.1 L1250.9,514.8 L1249.8,517.7 L1249.2,520.7 L1249.0,523.7 L1249.2,526.8 L1249.8,529.8 L1250.9,532.7 L1252.3,535.4 L1254.0,537.8 L1256.0,539.9 L1258.2,541.7 L1260.6,543.1 L1263.0,544.2 L1265.4,544.8 L1267.8,545.0 L1270.0,544.9 L1272.0,544.5 L1273.7,543.7 L1275.1,542.7 L1276.2,541.5 L1276.8,540.2 L1277.0,538.8 L1276.8,537.4 L1276.2,536.0 L1275.1,534.8 L1273.7,533.8 L1272.0,533.0 L1270.0,532.6 L1267.8,532.5 L1265.4,532.7 L1263.0,533.4 L1260.6,534.4 L1258.2,535.8 L1256.0,537.6 L1254.0,539.7 L1252.3,542.1 L1250.9,544.8 L1249.8,547.7 L1249.2,550.7 L1249.0,553.8 L1249.2,556.9 L1249.8,559.9 L1250.9,562.7 L1252.3,565.4 L1254.0,567.8 L1256.0,570.0 L1258.2,571.8 L1260.6,573.2 L1263.0,574.2 L1265.4,574.8 L1267.8,575.1 L1270.0,575.0 L1272.0,574.5 L1273.7,573.8 L1275.1,572.8 L1276.2,571.5 L1276.8,570.2 L1277.0,568.8 L1276.8,567.4 L1276.2,566.1 L1275.1,564.8 L1273.7,563.8 L1272.0,563.1 L1270.0,562.6 L1267.8,562.5 L1265.4,562.8 L1263.0,563.4 L1260.6,564.4 L1258.2,565.8 L1256.0,567.6 L1254.0,569.8 L1252.3,572.2 L1250.9,574.9 L1249.8,577.7 L1249.2,580.7 L1249.0,583.8 L1249.2,586.9 L1249.8,589.9 L1250.9,592.8 L1252.3,595.5 L1254.0,597.9 L1256.0,600.0 L1258.2,601.8 L1260.6,603.2 L1263.0,604.2 L1265.4,604.9 L1267.8,605.1 L1270.0,605.0 L1272.0,604.6 L1273.7,603.8 L1275.1,602.8 L1276.2,601.6 L1276.8,600.2 L1277.0,598.8 L1276.8,597.4 L1276.2,596.1 L1275.1,594.9 L1273.7,593.9 L1272.0,593.1 L1270.0,592.7 L1267.8,592.5 L1265.4,592.8 L1263.0,593.4 L1260.6,594.5 L1258.2,595.9 L1256.0,597.7 L1254.0,599.8 L1252.3,602.2 L1250.9,604.9 L1249.8,607.8 L1249.2,610.8 L1249.0,613.9 L1249.2,616.9 L1249.8,619.9 L1250.9,622.8 L1252.3,625.5 L1254.0,627.9 L1256.0,630.0 L1258.2,631.8 L1260.6,633.2 L1263.0,634.3 L1265.4,634.9 L1267.8,635.2 L1270.0,635.0 L1272.0,634.6 L1273.7,633.8 L1275.1,632.8 L1276.2,631.6 L1276.8,630.3 L1277.0,628.9 L1276.8,627.5 L1276.2,626.1 L1275.1,624.9 L1273.7,623.9 L1272.0,623.2 L1270.0,622.7 L1267.8,622.6 L1265.4,622.8 L1263.0,623.5 L1260.6,624.5 L1258.2,625.9 L1256.0,627.7 L1254.0,629.8 L1252.3,632.3 L1250.9,634.9 L1249.8,637.8 L1249.2,640.8 L1249.0,643.9 L1249.2,647.0 L1249.8,650.0 L1250.9,652.9 L1252.3,655.5 L1254.0,658.0 L1256.0,660.1 L1258.2,661.9 L1260.6,663.3 L1263.0,664.3 L1265.4,665.0 L1267.8,665.2 L1270.0,665.1 L1272.0,664.6 L1273.7,663.9 L1275.1,662.9 L1276.2,661.7 L1276.8,660.3 L1277.0,658.9 L1276.8,657.5 L1276.2,656.2 L1275.1,655.0 L1273.7,654.0 L1272.0,653.2 L1270.0,652.7 L1267.8,652.6 L1265.4,652.9 L1263.0,653.5 L1260.6,654.5 L1258.2,656.0 L1256.0,657.7 L1254.0,659.9 L1252.3,662.3 L1250.9,665.0 L1249.8,667.8 L1249.2,670.9 L1249.0,673.9 L1249.2,677.0 L1249.8,680.0 L1250.9,682.9 L1252.3,685.6 L1254.0,688.0 L1256.0,690.1 L1258.2,691.9 L1260.6,693.3 L1263.0,694.4 L1265.4,695.0 L1267.8,695.2 L1270.0,695.1 L1272.0,694.7 L1273.7,693.9 L1275.1,692.9 L1276.2,691.7 L1276.8,690.4 L1277.0,689.0 L1276.8,687.5 L1276.2,686.2 L1275.1,685.0 L1273.7,684.0 L1272.0,683.2 L1270.0,682.8 L1267.8,682.7 L1265.4,682.9 L1263.0,683.6 L1260.6,684.6 L1258.2,686.0 L1256.0,687.8 L1254.0,689.9 L1252.3,692.3 L1250.9,695.0 L1249.8,697.9 L1249.2,700.9 L1249.0,704.0 L1249.2,707.0 L1249.8,710.1 L1250.9,712.9 L1252.3,715.6 L1254.0,718.0 L1256.0,720.2 L1258.2,721.9 L1260.6,723.4 L1263.0,724.4 L1265.4,725.0 L1267.8,725.3 L1270.0,725.2 L1272.0,724.7 L1273.7,723.9 L1275.1,722.9 L1276.2,721.7 L1276.8,720.4 L1277.0,719.0 L1276.8,717.6 L1276.2,716.2 L1275.1,715.0 L1273.7,714.0 L1272.0,713.3 L1270.0,712.8 L1267.8,712.7 L1265.4,713.0 L1263.0,713.6 L1260.6,714.6 L1258.2,716.0 L1256.0,717.8 L1254.0,719.9 L1252.3,722.4 L1250.9,725.1 L1249.8,727.9 L1249.2,730.9 L1249.0,734.0 L1249.2,737.1 L1249.8,740.1 L1250.9,743.0 L1252.3,745.6 L1254.0,748.1 L1256.0,750.2 L1258.2,752.0 L1260.6,753.4 L1263.0,754.4 L1265.4,755.1 L1267.8,755.3 L1270.0,755.2 L1272.0,754.7 L1273.7,754.0 L1275.1,753.0 L1276.2,751.8 L1276.8,750.4 L1277.0,749.0 L1276.8,747.6 L1276.2,746.3 L1275.1,745.1 L1273.7,744.1 L1272.0,743.3 L1270.0,742.9 L1267.8,742.7 L1265.4,743.0 L1263.0,743.6 L1260.6,744.7 L1258.2,746.1 L1256.0,747.9 L1254.0,750.0 L1252.3,752.4 L1250.9,755.1 L1249.8,758.0 L1249.2,761.0 L1249.0,764.0 L1249.2,767.1 L1249.8,770.1 L1250.9,773.0 L1252.3,775.7 L1254.0,778.1 L1256.0,780.2 L1258.2,782.0 L1260.6,783.4 L1263.0,784.5 L1265.4,785.1 L1267.8,785.4 L1270.0,785.2 L1272.0,784.8 L1273.7,784.0 L1275.1,783.0 L1276.2,781.8 L1276.8,780.5 L1277.0,779.1 L1276.8,777.7 L1276.2,776.3 L1275.1,775.1 L1273.7,774.1 L1272.0,773.4 L1270.0,772.9 L1267.8,772.8 L1265.4,773.0 L1263.0,773.7 L1260.6,774.7 L1258.2,776.1 L1256.0,777.9 L1254.0,780.0 L1252.3,782.5 L1250.9,785.1 L1249.8,788.0 L1249.2,791.0 L1249.0,794.1 L1249.2,797.2 L1249.8,800.2 L1250.9,803.0 L1252.3,805.7 L1254.0,808.1 L1256.0,810.3 L1258.2,812.1 L1260.6,813.5 L1263.0,814.5 L1265.4,815.1 L1267.8,815.4 L1270.0,815.3 L1272.0,814.8 L1273.7,814.1 L1275.1,813.1 L1276.2,811.9 L1276.8,810.5 L1277.0,809.1 L1276.8,807.7 L1276.2,806.4 L1275.1,805.2 L1273.7,804.1 L1272.0,803.4 L1270.0,802.9 L1267.8,802.8 L1265.4,803.1 L1263.0,803.7 L1260.6,804.7 L1258.2,806.2 L1256.0,807.9 L1254.0,810.1 L1252.3,812.5 L1250.9,815.2 L1249.8,818.0 L1249.2,821.0 L1249.0,824.1 L1249.2,827.2 L1249.8,830.2 L1250.9,833.1 L1252.3,835.8 L1254.0,838.2 L1256.0,840.3 L1258.2,842.1 L1260.6,843.5 L1263.0,844.5 L1265.4,845.2 L1267.8,845.4 L1270.0,845.3 L1272.0,844.9 L1273.7,844.1 L1275.1,843.1 L1276.2,841.9 L1276.8,840.6 L1277.0,839.1 L1276.8,837.7 L1276.2,836.4 L1275.1,835.2 L1273.7,834.2 L1272.0,833.4 L1270.0,833.0 L1267.8,832.9 L1265.4,833.1 L1263.0,833.7 L1260.6,834.8 L1258.2,836.2 L1256.0,838.0 L1254.0,840.1 L1252.3,842.5 L1250.9,845.2 L1249.8,847.4 L1249.0,849.3 L1248.5,851.3 L1248.2,853.3 L1248.2,855.4 L1248.4,857.6 L1248.8,859.9 L1249.3,862.4 L1250.1,864.9 L1251.0,867.4 L1252.0,869.9 L1253.2,872.2 L1254.6,874.3 L1256.2,876.1 L1257.9,877.5 L1259.8,878.4 L1261.7,878.8 L1263.6,878.7 L1265.4,878.1 L1266.9,877.0 L1268.2,875.6 L1269.0,873.9 L1269.4,872.0 L1269.2,870.1 L1268.6,868.3 L1267.4,866.7 L1265.8,865.4 L1263.9,864.4 L1261.6,863.6 L1259.1,863.2 L1256.5,863.0 L1253.8,863.1 L1251.1,863.3 L1248.5,863.6 L1246.1,864.0 L1243.8,864.6 L1241.6,865.3 L1239.7,866.2 L1238.0,867.2 L1236.5,868.5 L1235.0,870.0 L1233.6,871.8 L1232.3,873.7 L1231.1,875.9 L1229.9,878.3 L1228.8,880.7 L1227.9,883.2 L1227.2,885.8 L1226.8,888.3 L1226.7,890.6 L1227.0,892.8 L1227.8,894.8 L1228.9,896.4 L1230.4,897.6 L1232.1,898.4 L1234.0,898.7 L1235.9,898.4 L1237.6,897.8 L1239.2,896.6 L1240.3,895.2 L1241.1,893.4 L1241.3,891.4 L1241.1,889.4 L1240.3,887.3 L1239.2,885.2 L1237.7,883.2 L1235.9,881.3 L1233.9,879.5 L1231.8,877.8 L1229.7,876.3 L1227.5,874.9 L1225.5,873.8 L1223.5,872.8 L1220.4,872.2 L1216.9,872.0 L1213.4,872.2 L1210.0,872.8 L1206.7,873.9 L1203.7,875.3 L1200.9,877.0 L1198.5,879.0 L1196.5,881.2 L1194.9,883.6 L1193.7,886.0 L1193.0,888.4 L1192.7,890.8 L1192.9,893.0 L1193.4,895.0 L1194.2,896.7 L1195.4,898.1 L1196.7,899.2 L1198.3,899.8 L1199.9,900.0 L1201.4,899.8 L1203.0,899.2 L1204.3,898.1 L1205.5,896.7 L1206.3,895.0 L1206.8,893.0 L1207.0,890.8 L1206.7,888.4 L1206.0,886.0 L1204.8,883.6 L1203.2,881.2 L1201.2,879.0 L1198.8,877.0 L1196.0,875.3 L1193.0,873.9 L1189.7,872.8 L1186.3,872.2 L1182.8,872.0 L1179.3,872.2 L1175.9,872.8 L1172.7,873.9 L1169.6,875.3 L1166.9,877.0 L1164.5,879.0 L1162.5,881.2 L1160.9,883.6 L1159.7,886.0 L1159.0,888.4 L1158.7,890.8 L1158.8,893.0 L1159.3,895.0 L1160.2,896.7 L1161.3,898.1 L1162.7,899.2 L1164.2,899.8 L1165.8,900.0 L1167.4,899.8 L1168.9,899.2 L1170.3,898.1 L1171.4,896.7 L1172.3,895.0 L1172.8,893.0 L1172.9,890.8 L1172.6,888.4 L1171.9,886.0 L1170.8,883.6 L1169.2,881.2 L1167.1,879.0 L1164.7,877.0 L1162.0,875.3 L1158.9,873.9 L1155.7,872.8 L1152.3,872.2 L1148.8,872.0 L1145.3,872.2 L1141.9,872.8 L1138.6,873.9 L1135.6,875.3 L1132.9,877.0 L1130.4,879.0 L1128.4,881.2 L1126.8,883.6 L1125.6,886.0 L1124.9,888.4 L1124.6,890.8 L1124.8,893.0 L1125.3,895.0 L1126.1,896.7 L1127.3,898.1 L1128.7,899.2 L1130.2,899.8 L1131.8,900.0 L1133.4,899.8 L1134.9,899.2 L1136.2,898.1 L1137.4,896.7 L1138.2,895.0 L1138.8,893.0 L1138.9,890.8 L1138.6,888.4 L1137.9,886.0 L1136.7,883.6 L1135.1,881.2 L1133.1,879.0 L1130.7,877.0 L1127.9,875.3 L1124.9,873.9 L1121.6,872.8 L1118.2,872.2 L1114.7,872.0 L1111.3,872.2 L1107.8,872.8 L1104.6,873.9 L1101.6,875.3 L1098.8,877.0 L1096.4,879.0 L1094.4,881.2 L1092.8,883.6 L1091.6,886.0 L1090.9,888.4 L1090.6,890.8 L1090.7,893.0 L1091.2,895.0 L1092.1,896.7 L1093.2,898.1 L1094.6,899.2 L1096.1,899.8 L1097.7,900.0 L1099.3,899.8 L1100.8,899.2 L1102.2,898.1 L1103.3,896.7 L1104.2,895.0 L1104.7,893.0 L1104.8,890.8 L1104.6,888.4 L1103.8,886.0 L1102.7,883.6 L1101.1,881.2 L1099.0,879.0 L1096.6,877.0 L1093.9,875.3 L1090.9,873.9 L1087.6,872.8 L1084.2,872.2 L1080.7,872.0 L1077.2,872.2 L1073.8,872.8 L1070.5,873.9 L1067.5,875.3 L1064.8,877.0 L1062.4,879.0 L1060.3,881.2 L1058.7,883.6 L1057.6,886.0 L1056.8,888.4 L1056.6,890.8 L1056.7,893.0 L1057.2,895.0 L1058.1,896.7 L1059.2,898.1 L1060.6,899.2 L1062.1,899.8 L1063.7,900.0 L1065.3,899.8 L1066.8,899.2 L1068.2,898.1 L1069.3,896.7 L1070.2,895.0 L1070.7,893.0 L1070.8,890.8 L1070.5,888.4 L1069.8,886.0 L1068.6,883.6 L1067.0,881.2 L1065.0,879.0 L1062.6,877.0 L1059.8,875.3 L1056.8,873.9 L1053.6,872.8 L1050.1,872.2 L1046.7,872.0 L1043.2,872.2 L1039.8,872.8 L1036.5,873.9 L1033.5,875.3 L1030.7,877.0 L1028.3,879.0 L1026.3,881.2 L1024.7,883.6 L1023.5,886.0 L1022.8,888.4 L1022.5,890.8 L1022.6,893.0 L1023.2,895.0 L1024.0,896.7 L1025.2,898.1 L1026.5,899.2 L1028.0,899.8 L1029.6,900.0 L1031.2,899.8 L1032.7,899.2 L1034.1,898.1 L1035.3,896.7 L1036.1,895.0 L1036.6,893.0 L1036.8,890.8 L1036.5,888.4 L1035.8,886.0 L1034.6,883.6 L1033.0,881.2 L1031.0,879.0 L1028.5,877.0 L1025.8,875.3 L1022.8,873.9 L1019.5,872.8 L1016.1,872.2 L1012.6,872.0 L1009.1,872.2 L1005.7,872.8 L1002.5,873.9 L999.4,875.3 L996.7,877.0 L994.3,879.0 L992.2,881.2 L990.6,883.6 L989.5,886.0 L988.7,888.4 L988.5,890.8 L988.6,893.0 L989.1,895.0 L990.0,896.7 L991.1,898.1 L992.5,899.2 L994.0,899.8 L995.6,900.0 L997.2,899.8 L998.7,899.2 L1000.1,898.1 L1001.2,896.7 L1002.1,895.0 L1002.6,893.0 L1002.7,890.8 L1002.4,888.4 L1001.7,886.0 L1000.5,883.6 L998.9,881.2 L996.9,879.0 L994.5,877.0 L991.8,875.3 L988.7,873.9 L985.5,872.8 L982.1,872.2 L978.6,872.0 L975.1,872.2 L971.7,872.8 L968.4,873.9 L965.4,875.3 L962.6,877.0 L960.2,879.0 L958.2,881.2 L956.6,883.6 L955.4,886.0 L954.7,888.4 L954.4,890.8 L954.6,893.0 L955.1,895.0 L955.9,896.7 L957.1,898.1 L958.4,899.2 L960.0,899.8 L961.5,900.0 L963.1,899.8 L964.7,899.2 L966.0,898.1 L967.2,896.7 L968.0,895.0 L968.5,893.0 L968.7,890.8 L968.4,888.4 L967.7,886.0 L966.5,883.6 L964.9,881.2 L962.9,879.0 L960.5,877.0 L957.7,875.3 L954.7,873.9 L951.4,872.8 L948.0,872.2 L944.5,872.0 L941.0,872.2 L937.6,872.8 L934.4,873.9 L931.3,875.3 L928.6,877.0 L926.2,879.0 L924.2,881.2 L922.6,883.6 L921.4,886.0 L920.7,888.4 L920.4,890.8 L920.5,893.0 L921.0,895.0 L921.9,896.7 L923.0,898.1 L924.4,899.2 L925.9,899.8 L927.5,900.0 L929.1,899.8 L930.6,899.2 L932.0,898.1 L933.1,896.7 L934.0,895.0 L934.5,893.0 L934.6,890.8 L934.3,888.4 L933.6,886.0 L932.5,883.6 L930.8,881.2 L928.8,879.0 L926.4,877.0 L923.7,875.3 L920.6,873.9 L917.4,872.8 L914.0,872.2 L910.5,872.0 L907.0,872.2 L903.6,872.8 L900.3,873.9 L897.3,875.3 L894.5,877.0 L892.1,879.0 L890.1,881.2 L888.5,883.6 L887.3,886.0 L886.6,888.4 L886.3,890.8 L886.5,893.0 L887.0,895.0 L887.8,896.7 L889.0,898.1 L890.3,899.2 L891.9,899.8 L893.5,900.0 L895.1,899.8 L896.6,899.2 L897.9,898.1 L899.1,896.7 L899.9,895.0 L900.5,893.0 L900.6,890.8 L900.3,888.4 L899.6,886.0 L898.4,883.6 L896.8,881.2 L894.8,879.0 L892.4,877.0 L889.6,875.3 L886.6,873.9 L883.3,872.8 L879.9,872.2 L876.4,872.0 L873.8,872.2 L871.8,872.7 L869.7,873.4 L867.5,874.3 L865.3,875.4 L863.0,876.7 L860.7,878.2 L858.6,879.8 L856.6,881.5 L854.9,883.3 L853.5,885.3 L852.5,887.3 L852.1,889.3 L852.1,891.3 L852.7,893.1 L853.7,894.7 L855.1,896.0 L856.8,896.8 L858.7,897.2 L860.6,897.2 L862.4,896.6 L863.9,895.5 L865.2,894.0 L866.2,892.2 L866.7,890.0 L866.9,887.6 L866.7,885.1 L866.3,882.5 L865.6,879.9 L864.8,877.4 L863.9,874.9 L862.8,872.6 L861.8,870.5 L860.6,868.6 L859.3,867.0 L857.9,865.6 L856.3,864.3 L854.5,863.3 L852.4,862.4 L850.2,861.6 L847.8,860.9 L845.2,860.3 L842.6,859.8 L839.9,859.5 L837.3,859.4 L834.8,859.6 L832.5,860.0 L830.4,860.9 L828.7,862.0 L827.4,863.5 L826.5,865.2 L826.2,867.1 L826.4,869.0 L827.0,870.7 L828.1,872.3 L829.5,873.5 L831.3,874.3 L833.1,874.6 L835.1,874.4 L837.0,873.7 L838.9,872.5 L840.6,870.9 L842.2,868.9 L843.7,866.8 L845.0,864.4 L846.1,862.0 L847.1,859.5 L847.9,857.2 L848.6,854.9 L849.0,852.7 L849.2,850.6 L849.1,848.6 L848.8,846.6 L848.2,843.9 L847.1,841.1 L845.7,838.4 L844.0,836.0 L842.0,833.8 L839.8,832.1 L837.4,830.6 L835.0,829.6 L832.6,829.0 L830.2,828.7 L828.0,828.8 L826.0,829.3 L824.3,830.0 L822.9,831.1 L821.8,832.3 L821.2,833.6 L821.0,835.0 L821.2,836.4 L821.8,837.8 L822.9,839.0 L824.3,840.0 L826.0,840.7 L828.0,841.2 L830.2,841.3 L832.6,841.0 L835.0,840.4 L837.4,839.4 L839.8,838.0 L842.0,836.2 L844.0,834.0 L845.7,831.6 L847.1,828.9 L848.2,826.1 L848.8,823.1 L849.0,820.0 L848.8,816.9 L848.2,813.9 L847.1,811.0 L845.7,808.4 L844.0,805.9 L842.0,803.8 L839.8,802.0 L837.4,800.6 L835.0,799.6 L832.6,798.9 L830.2,798.7 L828.0,798.8 L826.0,799.3 L824.3,800.0 L822.9,801.0 L821.8,802.2 L821.2,803.6 L821.0,805.0 L821.2,806.4 L821.8,807.7 L822.9,808.9 L824.3,809.9 L826.0,810.7 L828.0,811.1 L830.2,811.3 L832.6,811.0 L835.0,810.4 L837.4,809.3 L839.8,807.9 L842.0,806.1 L844.0,804.0 L845.7,801.6 L847.1,798.9 L848.2,796.0 L848.8,793.0 L849.0,789.9 L848.8,786.9 L848.2,783.9 L847.1,781.0 L845.7,778.3 L844.0,775.9 L842.0,773.8 L839.8,772.0 L837.4,770.6 L835.0,769.5 L832.6,768.9 L830.2,768.6 L828.0,768.8 L826.0,769.2 L824.3,770.0 L822.9,771.0 L821.8,772.2 L821.2,773.5 L821.0,774.9 L821.2,776.3 L821.8,777.7 L822.9,778.9 L824.3,779.9 L826.0,780.6 L828.0,781.1 L830.2,781.2 L832.6,781.0 L835.0,780.3 L837.4,779.3 L839.8,777.9 L842.0,776.1 L844.0,774.0 L845.7,771.5 L847.1,768.9 L848.2,766.0 L848.8,763.0 L849.0,759.9 L848.8,756.8 L848.2,753.8 L847.1,751.0 L845.7,748.3 L844.0,745.9 L842.0,743.7 L839.8,741.9 L837.4,740.5 L835.0,739.5 L832.6,738.9 L830.2,738.6 L828.0,738.7 L826.0,739.2 L824.3,739.9 L822.9,740.9 L821.8,742.1 L821.2,743.5 L821.0,744.9 L821.2,746.3 L821.8,747.6 L822.9,748.8 L824.3,749.9 L826.0,750.6 L828.0,751.1 L830.2,751.2 L832.6,750.9 L835.0,750.3 L837.4,749.3 L839.8,747.8 L842.0,746.1 L844.0,743.9 L845.7,741.5 L847.1,738.8 L848.2,736.0 L848.8,732.9 L849.0,729.9 L848.8,726.8 L848.2,723.8 L847.1,720.9 L845.7,718.2 L844.0,715.8 L842.0,713.7 L839.8,711.9 L837.4,710.5 L835.0,709.5 L832.6,708.8 L830.2,708.6 L828.0,708.7 L826.0,709.1 L824.3,709.9 L822.9,710.9 L821.8,712.1 L821.2,713.4 L821.0,714.9 L821.2,716.3 L821.8,717.6 L822.9,718.8 L824.3,719.8 L826.0,720.6 L828.0,721.0 L830.2,721.1 L832.6,720.9 L835.0,720.3 L837.4,719.2 L839.8,717.8 L842.0,716.0 L844.0,713.9 L845.7,711.5 L847.1,708.8 L848.2,705.9 L848.8,702.9 L849.0,699.8 L848.8,696.8 L848.2,693.8 L847.1,690.9 L845.7,688.2 L844.0,685.8 L842.0,683.6 L839.8,681.9 L837.4,680.4 L835.0,679.4 L832.6,678.8 L830.2,678.5 L828.0,678.6 L826.0,679.1 L824.3,679.9 L822.9,680.9 L821.8,682.1 L821.2,683.4 L821.0,684.8 L821.2,686.2 L821.8,687.6 L822.9,688.8 L824.3,689.8 L826.0,690.5 L828.0,691.0 L830.2,691.1 L832.6,690.9 L835.0,690.2 L837.4,689.2 L839.8,687.8 L842.0,686.0 L844.0,683.9 L845.7,681.4 L847.1,678.8 L848.2,675.9 L848.8,672.9 L849.0,669.8 L848.8,666.7 L848.2,663.7 L847.1,660.8 L845.7,658.2 L844.0,655.7 L842.0,653.6 L839.8,651.8 L837.4,650.4 L835.0,649.4 L832.6,648.7 L830.2,648.5 L828.0,648.6 L826.0,649.1 L824.3,649.8 L822.9,650.8 L821.8,652.0 L821.2,653.4 L821.0,654.8 L821.2,656.2 L821.8,657.5 L822.9,658.7 L824.3,659.7 L826.0,660.5 L828.0,660.9 L830.2,661.1 L832.6,660.8 L835.0,660.2 L837.4,659.1 L839.8,657.7 L842.0,655.9 L844.0,653.8 L845.7,651.4 L847.1,648.7 L848.2,645.8 L848.8,642.8 L849.0,639.8 L848.8,636.7 L848.2,633.7 L847.1,630.8 L845.7,628.1 L844.0,625.7 L842.0,623.6 L839.8,621.8 L837.4,620.4 L835.0,619.3 L832.6,618.7 L830.2,618.5 L828.0,618.6 L826.0,619.0 L824.3,619.8 L822.9,620.8 L821.8,622.0 L821.2,623.3 L821.0,624.7 L821.2,626.1 L821.8,627.5 L822.9,628.7 L824.3,629.7 L826.0,630.5 L828.0,630.9 L830.2,631.0 L832.6,630.8 L835.0,630.1 L837.4,629.1 L839.8,627.7 L842.0,625.9 L844.0,623.8 L845.7,621.4 L847.1,618.7 L848.2,615.8 L848.8,612.8 L849.0,609.7 L848.8,606.6 L848.2,603.6 L847.1,600.8 L845.7,598.1 L844.0,595.7 L842.0,593.5 L839.8,591.7 L837.4,590.3 L835.0,589.3 L832.6,588.7 L830.2,588.4 L828.0,588.5 L826.0,589.0 L824.3,589.7 L822.9,590.7 L821.8,592.0 L821.2,593.3 L821.0,594.7 L821.2,596.1 L821.8,597.4 L822.9,598.7 L824.3,599.7 L826.0,600.4 L828.0,600.9 L830.2,601.0 L832.6,600.7 L835.0,600.1 L837.4,599.1 L839.8,597.7 L842.0,595.9 L844.0,593.7 L845.7,591.3 L847.1,588.6 L848.2,585.8 L848.8,582.8 L849.0,579.7 L848.8,576.6 L848.2,573.6 L847.1,570.7 L845.7,568.0 L844.0,565.6 L842.0,563.5 L839.8,561.7 L837.4,560.3 L835.0,559.3 L832.6,558.6 L830.2,558.4 L828.0,558.5 L826.0,558.9 L824.3,559.7 L822.9,560.7 L821.8,561.9 L821.2,563.3 L821.0,564.7 L821.2,566.1 L821.8,567.4 L822.9,568.6 L824.3,569.6 L826.0,570.4 L828.0,570.8 L830.2,571.0 L832.6,570.7 L835.0,570.1 L837.4,569.0 L839.8,567.6 L842.0,565.8 L844.0,563.7 L845.7,561.3 L847.1,558.6 L848.2,555.7 L848.8,552.7 L849.0,549.6 L848.8,546.6 L848.2,543.6 L847.1,540.7 L845.7,538.0 L844.0,535.6 L842.0,533.5 L839.8,531.7 L837.4,530.3 L835.0,529.2 L832.6,528.6 L830.2,528.3 L828.0,528.5 L826.0,528.9 L824.3,529.7 L822.9,530.7 L821.8,531.9 L821.2,533.2 L821.0,534.6 L821.2,536.0 L821.8,537.4 L822.9,538.6 L824.3,539.6 L826.0,540.3 L828.0,540.8 L830.2,540.9 L832.6,540.7 L835.0,540.0 L837.4,539.0 L839.8,537.6 L842.0,535.8 L844.0,533.7 L845.7,531.2 L847.1,528.6 L848.2,525.7 L848.8,522.7 L849.0,519.6 L848.8,516.5 L848.2,513.5 L847.1,510.6 L845.7,508.0 L844.0,505.5 L842.0,503.4 L839.8,501.6 L837.4,500.2 L835.0,499.2 L832.6,498.5 L830.2,498.3 L828.0,498.4 L826.0,498.9 L824.3,499.6 L822.9,500.6 L821.8,501.8 L821.2,503.2 L821.0,504.6 L821.2,506.0 L821.8,507.3 L822.9,508.5 L824.3,509.5 L826.0,510.3 L828.0,510.8 L830.2,510.9 L832.6,510.6 L835.0,510.0 L837.4,509.0 L839.8,507.5 L842.0,505.8 L844.0,503.6 L845.7,501.2 L847.1,498.5 L848.2,495.7 L848.8,492.6 L849.0,489.6 L848.8,486.5 L848.2,483.5 L847.1,480.6 L845.7,477.9 L844.0,475.5 L842.0,473.4 L839.8,471.6 L837.4,470.2 L835.0,469.1 L832.6,468.5 L830.2,468.3 L828.0,468.4 L826.0,468.8 L824.3,469.6 L822.9,470.6 L821.8,471.8 L821.2,473.1 L821.0,474.5 L821.2,476.0 L821.8,477.3 L822.9,478.5 L824.3,479.5 L826.0,480.3 L828.0,480.7 L830.2,480.8 L832.6,480.6 L835.0,479.9 L837.4,478.9 L839.8,477.5 L842.0,475.7 L844.0,473.6 L845.7,471.2 L847.1,468.5 L848.2,465.6 L848.8,462.6 L849.0,459.5 L848.8,456.5 L848.2,453.4 L847.1,450.6 L845.7,447.9 L844.0,445.5 L842.0,443.3 L839.8,441.6 L837.4,440.1 L835.0,439.1 L832.6,438.5 L830.2,438.2 L828.0,438.3 L826.0,438.8 L824.3,439.6 L822.9,440.6 L821.8,441.8 L821.2,443.1 L821.0,444.5 L821.2,445.9 L821.8,447.3 L822.9,448.5 L824.3,449.5 L826.0,450.2 L828.0,450.7 L830.2,450.8 L832.6,450.5 L835.0,449.9 L837.4,448.9 L839.8,447.5 L842.0,445.7 L844.0,443.6 L845.7,441.1 L847.1,438.4 L848.2,435.6 L848.8,432.6 L849.0,429.5 L848.8,426.4 L848.2,423.4 L847.1,420.5 L845.7,417.9 L844.0,415.4 L842.0,413.3 L839.8,411.5 L837.4,410.1 L835.0,409.1 L832.6,408.4 L830.2,408.2 L828.0,408.3 L826.0,408.8 L824.3,409.5 L822.9,410.5 L821.8,411.7 L821.2,413.1 L821.0,414.5 L821.2,415.9 L821.8,417.2 L822.9,418.4 L824.3,419.4 L826.0,420.2 L828.0,420.6 L830.2,420.8 L832.6,420.5 L835.0,419.9 L837.4,418.8 L839.8,417.4 L842.0,415.6 L844.0,413.5 L845.7,411.1 L847.1,408.4 L848.2,405.5 L848.8,402.5 L849.0,399.5 L848.8,396.4 L848.2,393.4 L847.1,390.5 L845.7,387.8 L844.0,385.4 L842.0,383.3 L839.8,381.5 L837.4,380.1 L835.0,379.0 L832.6,378.4 L830.2,378.1 L828.0,378.3 L826.0,378.7 L824.3,379.5 L822.9,380.5 L821.8,381.7 L821.2,383.0 L821.0,384.4 L821.2,385.8 L821.8,387.2 L822.9,388.4 L824.3,389.4 L826.0,390.1 L828.0,390.6 L830.2,390.7 L832.6,390.5 L835.0,389.8 L837.4,388.8 L839.8,387.4 L842.0,385.6 L844.0,383.5 L845.7,381.0 L847.1,378.4 L848.2,375.5 L848.8,372.5 L849.0,369.4 L848.8,366.3 L848.2,363.3 L847.1,360.5 L845.7,357.8 L844.0,355.4 L842.0,353.2 L839.8,351.4 L837.4,350.0 L835.0,349.0 L832.6,348.4 L830.2,348.1 L828.0,348.2 L826.0,348.7 L824.3,349.4 L822.9,350.4 L821.8,351.6 L821.2,353.0 L821.0,354.4 L821.2,355.8 L821.8,357.1 L822.9,358.3 L824.3,359.4 L826.0,360.1 L828.0,360.6 L830.2,360.7 L832.6,360.4 L835.0,359.8 L837.4,358.8 L839.8,357.3 L842.0,355.6 L844.0,353.4 L845.7,351.0 L847.1,348.3 L848.2,345.5 L848.8,342.5 L849.0,339.4 L848.8,336.3 L848.2,333.3 L847.1,330.4 L845.7,327.7 L844.0,325.3 L842.0,323.2 L839.8,321.4 L837.4,320.0 L835.0,319.0 L832.6,318.3 L830.2,318.1 L828.0,318.2 L826.0,318.6 L824.3,319.4 L822.9,320.4 L821.8,321.6 L821.2,322.9 L821.0,324.4 L821.2,325.8 L821.8,327.1 L822.9,328.3 L824.3,329.3 L826.0,330.1 L828.0,330.5 L830.2,330.6 L832.6,330.4 L835.0,329.8 L837.4,328.7 L839.8,327.3 L842.0,325.5 L844.0,323.4 L845.7,321.0 L847.1,318.3 L848.2,316.1 L849.0,314.2 L849.5,312.2 L849.8,310.2 L849.8,308.1 L849.6,305.9 L849.2,303.6 L848.7,301.1 L847.9,298.6 L847.0,296.1 L846.0,293.6 L844.8,291.3 L843.4,289.2 L841.8,287.4 L840.1,286.0 L838.2,285.1 L836.3,284.7 L834.4,284.8 L832.6,285.4 L831.1,286.5 L829.8,287.9 L829.0,289.6 L828.6,291.5 L828.8,293.4 L829.4,295.2 L830.6,296.8 L832.2,298.1 L834.1,299.1 L836.4,299.9 L838.9,300.3 L841.5,300.5 L844.2,300.4 L846.9,300.2 L849.5,299.9 L851.9,299.5 L854.2,298.9 L856.4,298.2 L858.3,297.3 L860.0,296.3 L861.5,295.0 L863.0,293.5 L864.4,291.7 L865.7,289.8 L866.9,287.6 L868.1,285.2 L869.2,282.8 L870.1,280.3 L870.8,277.7 L871.2,275.2 L871.3,272.9 L871.0,270.7 L870.2,268.7 L869.1,267.1 L867.6,265.9 L865.9,265.1 L864.0,264.8 L862.1,265.1 L860.4,265.7 L858.8,266.9 L857.7,268.3 L856.9,270.1 L856.7,272.1 L856.9,274.1 L857.7,276.2 L858.8,278.3 L860.3,280.3 L862.1,282.2 L864.1,284.0 L866.2,285.7 L868.3,287.2 L870.5,288.6 L872.5,289.7 L874.5,290.7 L877.6,291.3 L881.1,291.5 L884.6,291.3 L888.0,290.7 L891.3,289.6 L894.3,288.2 L897.1,286.5 L899.5,284.5 L901.5,282.3 L903.1,279.9 L904.3,277.5 L905.0,275.1 L905.3,272.7 L905.1,270.5 L904.6,268.5 L903.8,266.8 L902.6,265.4 L901.3,264.3 L899.7,263.7 L898.1,263.5Z"/></g><g fill="#4d1a10" font-family="'Liberation Serif', serif" text-anchor="start"><text x="990.7" y="408.4" font-size="68" textLength="122" lengthAdjust="spacingAndGlyphs">Happy</text><text x="972.5" y="519.4" font-size="126" stroke="#4d1a10" stroke-width="2.6" textLength="158.5" lengthAdjust="spacingAndGlyphs">60th</text><text x="968.7" y="578.9" font-size="68" textLength="165.6" lengthAdjust="spacingAndGlyphs">Birthday</text><text x="954" y="689" font-size="128" stroke="#4d1a10" stroke-width="3" textLength="198" lengthAdjust="spacingAndGlyphs">MOM!</text><text x="1005.8" y="739.2" font-size="21" textLength="89.3" lengthAdjust="spacingAndGlyphs">love, all of us</text></g><defs><clipPath id="c1"><rect x="864" y="751" width="74.5" height="82"/></clipPath><clipPath id="c3"><rect x="921.5" y="804.7" width="63" height="53"/></clipPath><clipPath id="c4"><rect x="983" y="810" width="72" height="46"/></clipPath><clipPath id="c5"><rect x="1055" y="777" width="62" height="75"/></clipPath><clipPath id="c6"><rect x="1107.5" y="804" width="68" height="49"/></clipPath><clipPath id="c8"><rect x="1161.5" y="795" width="73" height="60"/></clipPath><clipPath id="frame"><path d="M864,347.5C864,325.408 881.908,307.5 904,307.5Q1050.0,305.5 1196,307.5C1219.1966,307.5 1238,326.3034 1238,349.5Q1239.0,585.75 1238,822C1238,840.7782 1222.7782,856 1204,856Q1053.0,860 902,856C881.0126,856 864,838.9874 864,818Q864,582.75 864,347.5Z"/></clipPath><filter id="bl" x="-20%" y="-20%" width="140%" height="140%"><feGaussianBlur stdDeviation="1.3"/></filter><filter id="bl2" x="-20%" y="-20%" width="140%" height="140%"><feGaussianBlur stdDeviation="3"/></filter><filter id="bl3" x="-20%" y="-20%" width="140%" height="140%"><feGaussianBlur stdDeviation="1.8"/></filter></defs><g clip-path="url(#frame)"><g clip-path="url(#c1)"><rect x="860" y="745" width="85" height="95" fill="#dfe8c2"/><path d="M860 755 L945 743 L945 750 L860 762Z" fill="#f7a24a"/><path d="M860 762 L945 750 L945 755 L860 767Z" fill="#dfe8c2"/><path d="M860 767 L945 755 L945 762 L860 774Z" fill="#68a7c3"/><path d="M860 774 L945 762 L945 767 L860 779Z" fill="#dfe8c2"/><path d="M860 779 L945 767 L945 774 L860 786Z" fill="#e84e79"/><path d="M860 786 L945 774 L945 779 L860 791Z" fill="#dfe8c2"/><path d="M860 791 L945 779 L945 786 L860 798Z" fill="#f7a24a"/><path d="M860 798 L945 786 L945 791 L860 803Z" fill="#dfe8c2"/><path d="M860 803 L945 791 L945 798 L860 810Z" fill="#e84e79"/><path d="M860 810 L945 798 L945 803 L860 815Z" fill="#dfe8c2"/><path d="M860 815 L945 803 L945 810 L860 822Z" fill="#f7a24a"/><path d="M860 822 L945 810 L945 815 L860 827Z" fill="#dfe8c2"/><path d="M860 827 L945 815 L945 822 L860 834Z" fill="#e84e79"/><path d="M860 834 L945 822 L945 827 L860 839Z" fill="#dfe8c2"/><path d="M860 839 L945 827 L945 834 L860 846Z" fill="#f7a24a"/></g><rect x="862" y="832" width="70" height="26" fill="#68a7c3"/><path d="M865 852 L905 842 L930 850 L905 845Z" fill="#4f8eab"/><g clip-path="url(#c3)"><rect x="921" y="804" width="64" height="54" fill="#e84e79"/><circle cx="930" cy="812" r="7" fill="#f5b450"/><circle cx="955" cy="808" r="7" fill="#f5b450"/><circle cx="978" cy="812" r="7" fill="#f5b450"/><circle cx="942" cy="825" r="7" fill="#f5b450"/><circle cx="965" cy="822" r="7" fill="#f5b450"/><circle cx="925" cy="842" r="7" fill="#f5b450"/><circle cx="948" cy="846" r="7" fill="#f5b450"/><circle cx="973" cy="842" r="7" fill="#f5b450"/><circle cx="936" cy="858" r="7" fill="#f5b450"/><circle cx="962" cy="860" r="7" fill="#f5b450"/></g><rect x="921" y="831.5" width="64" height="4" fill="#4b1a12"/><rect x="951" y="805" width="3.8" height="52" fill="#4b1a12"/><g clip-path="url(#c4)"><rect x="983" y="810" width="72" height="46" fill="#dfe8c2"/><rect x="983" y="810" width="3" height="46" fill="#f7a24a"/><rect x="987.3" y="810" width="3" height="46" fill="#dfe8c2"/><rect x="991.5999999999999" y="810" width="3" height="46" fill="#e84e79"/><rect x="995.8999999999999" y="810" width="3" height="46" fill="#dfe8c2"/><rect x="1000.1999999999998" y="810" width="3" height="46" fill="#f7a24a"/><rect x="1004.4999999999998" y="810" width="3" height="46" fill="#68a7c3"/><rect x="1008.7999999999997" y="810" width="3" height="46" fill="#dfe8c2"/><rect x="1013.0999999999997" y="810" width="3" height="46" fill="#f7a24a"/><rect x="1017.3999999999996" y="810" width="3" height="46" fill="#dfe8c2"/><rect x="1021.6999999999996" y="810" width="3" height="46" fill="#e84e79"/><rect x="1025.9999999999995" y="810" width="3" height="46" fill="#f7a24a"/><rect x="1030.2999999999995" y="810" width="3" height="46" fill="#dfe8c2"/><rect x="1034.5999999999995" y="810" width="3" height="46" fill="#68a7c3"/><rect x="1038.8999999999994" y="810" width="3" height="46" fill="#dfe8c2"/><rect x="1043.1999999999994" y="810" width="3" height="46" fill="#f7a24a"/><rect x="1047.4999999999993" y="810" width="3" height="46" fill="#e84e79"/><rect x="1051.7999999999993" y="810" width="3" height="46" fill="#dfe8c2"/></g><rect x="974" y="788" width="81" height="23" fill="#5d9bb6"/><rect x="1017.5" y="790" width="4.5" height="66" fill="#4b1a12"/><g clip-path="url(#c5)"><rect x="1055" y="777" width="62" height="75" fill="#f7a24a"/><circle cx="1063" cy="787" r="8.5" fill="#fff"/><circle cx="1063" cy="787" r="6" fill="#e84e79"/><circle cx="1063" cy="787" r="3" fill="#c83d66"/><circle cx="1110" cy="785" r="8.5" fill="#fff"/><circle cx="1110" cy="785" r="6" fill="#e84e79"/><circle cx="1110" cy="785" r="3" fill="#c83d66"/><circle cx="1082" cy="793" r="8.5" fill="#fff"/><circle cx="1082" cy="793" r="6" fill="#e84e79"/><circle cx="1082" cy="793" r="3" fill="#c83d66"/><circle cx="1072" cy="805" r="8.5" fill="#fff"/><circle cx="1072" cy="805" r="6" fill="#e84e79"/><circle cx="1072" cy="805" r="3" fill="#c83d66"/><circle cx="1106" cy="808" r="8.5" fill="#fff"/><circle cx="1106" cy="808" r="6" fill="#e84e79"/><circle cx="1106" cy="808" r="3" fill="#c83d66"/><circle cx="1060" cy="820" r="8.5" fill="#fff"/><circle cx="1060" cy="820" r="6" fill="#e84e79"/><circle cx="1060" cy="820" r="3" fill="#c83d66"/><circle cx="1092" cy="819" r="8.5" fill="#fff"/><circle cx="1092" cy="819" r="6" fill="#e84e79"/><circle cx="1092" cy="819" r="3" fill="#c83d66"/><circle cx="1074" cy="833" r="8.5" fill="#fff"/><circle cx="1074" cy="833" r="6" fill="#e84e79"/><circle cx="1074" cy="833" r="3" fill="#c83d66"/><circle cx="1108" cy="835" r="8.5" fill="#fff"/><circle cx="1108" cy="835" r="6" fill="#e84e79"/><circle cx="1108" cy="835" r="3" fill="#c83d66"/><circle cx="1060" cy="847" r="8.5" fill="#fff"/><circle cx="1060" cy="847" r="6" fill="#e84e79"/><circle cx="1060" cy="847" r="3" fill="#c83d66"/><circle cx="1090" cy="848" r="8.5" fill="#fff"/><circle cx="1090" cy="848" r="6" fill="#e84e79"/><circle cx="1090" cy="848" r="3" fill="#c83d66"/></g><rect x="1083" y="777" width="4.5" height="75" fill="#4b1a12"/><g clip-path="url(#c8)"><rect x="1161.5" y="795" width="73" height="60" fill="#68a7c3"/><circle cx="1175" cy="801" r="3.8" fill="#b3d6e5"/><circle cx="1198" cy="801" r="3.8" fill="#b3d6e5"/><circle cx="1220" cy="801" r="3.8" fill="#b3d6e5"/><circle cx="1168" cy="815" r="3.8" fill="#b3d6e5"/><circle cx="1186" cy="813" r="3.8" fill="#b3d6e5"/><circle cx="1210" cy="815" r="3.8" fill="#b3d6e5"/><circle cx="1230" cy="812" r="3.8" fill="#b3d6e5"/><circle cx="1175" cy="828" r="3.8" fill="#b3d6e5"/><circle cx="1198" cy="827" r="3.8" fill="#b3d6e5"/><circle cx="1222" cy="828" r="3.8" fill="#b3d6e5"/><circle cx="1168" cy="842" r="3.8" fill="#b3d6e5"/><circle cx="1188" cy="843" r="3.8" fill="#b3d6e5"/><circle cx="1210" cy="842" r="3.8" fill="#b3d6e5"/><circle cx="1232" cy="840" r="3.8" fill="#b3d6e5"/></g><rect x="1161.5" y="775" width="73" height="21" fill="#3f7d99"/><g stroke="#6aa3bb" stroke-width="1.2"><line x1="1163.0" y1="776" x2="1163.0" y2="795"/><line x1="1166.3" y1="776" x2="1166.3" y2="795"/><line x1="1169.6" y1="776" x2="1169.6" y2="795"/><line x1="1172.9" y1="776" x2="1172.9" y2="795"/><line x1="1176.2" y1="776" x2="1176.2" y2="795"/><line x1="1179.5" y1="776" x2="1179.5" y2="795"/><line x1="1182.8" y1="776" x2="1182.8" y2="795"/><line x1="1186.1" y1="776" x2="1186.1" y2="795"/><line x1="1189.4" y1="776" x2="1189.4" y2="795"/><line x1="1192.7" y1="776" x2="1192.7" y2="795"/><line x1="1196.0" y1="776" x2="1196.0" y2="795"/><line x1="1199.3" y1="776" x2="1199.3" y2="795"/><line x1="1202.6" y1="776" x2="1202.6" y2="795"/><line x1="1205.9" y1="776" x2="1205.9" y2="795"/><line x1="1209.2" y1="776" x2="1209.2" y2="795"/><line x1="1212.5" y1="776" x2="1212.5" y2="795"/><line x1="1215.8" y1="776" x2="1215.8" y2="795"/><line x1="1219.1" y1="776" x2="1219.1" y2="795"/><line x1="1222.4" y1="776" x2="1222.4" y2="795"/><line x1="1225.7" y1="776" x2="1225.7" y2="795"/><line x1="1229.0" y1="776" x2="1229.0" y2="795"/><line x1="1232.3" y1="776" x2="1232.3" y2="795"/></g><rect x="1201" y="775" width="5" height="81" fill="#4b1a12"/><g clip-path="url(#c6)"><rect x="1107.5" y="804" width="68" height="49" fill="#a7c561"/><circle cx="1114" cy="811" r="6" fill="#e84e79"/><circle cx="1114" cy="811" r="2.3" fill="#f5b450"/><circle cx="1129" cy="823" r="7" fill="#e84e79"/><circle cx="1129" cy="823" r="2.7" fill="#f5b450"/><circle cx="1156" cy="812" r="5" fill="#e84e79"/><circle cx="1156" cy="812" r="1.9" fill="#f5b450"/><circle cx="1166" cy="815" r="7" fill="#e84e79"/><circle cx="1166" cy="815" r="2.7" fill="#f5b450"/><circle cx="1148" cy="830" r="5" fill="#e84e79"/><circle cx="1148" cy="830" r="1.9" fill="#f5b450"/><circle cx="1114" cy="842" r="5" fill="#e84e79"/><circle cx="1114" cy="842" r="1.9" fill="#f5b450"/><circle cx="1135" cy="846" r="5" fill="#e84e79"/><circle cx="1135" cy="846" r="1.9" fill="#f5b450"/><circle cx="1165" cy="839" r="5" fill="#e84e79"/><circle cx="1165" cy="839" r="1.9" fill="#f5b450"/></g><rect x="1107.5" y="831" width="68" height="2.5" fill="#4b1a12"/><rect x="1138" y="804" width="3.5" height="48" fill="#4b1a12"/><rect x="1131" y="843" width="70" height="12" fill="#a9c95f"/><rect x="1131" y="846" width="70" height="5" fill="#dde9bb"/><path d="M1164 855 V842 M1164 842 Q1150 838 1152 833 M1164 842 Q1158 832 1162 830 M1164 842 Q1170 832 1175 833 M1164 842 Q1178 840 1181 845" stroke="#4b1a12" stroke-width="1.6" fill="none"/><rect x="895" y="751" width="6" height="82" fill="#4b1a12"/><rect x="888" y="832" width="3" height="25" fill="#4b1a12"/><g fill="none" stroke="#4b1a12" stroke-width="2.6" stroke-linejoin="round"><path d="M898,751 Q882.4,738.3 880.1,744.5 Q877.9,750.8 898,751"/><path d="M898,751 Q892.5,731.6 887.1,735.4 Q881.7,739.3 898,751"/><path d="M898,751 Q904.6,732.0 898.0,732.0 Q891.4,732.0 898,751"/><path d="M898,751 Q914.3,739.3 908.9,735.4 Q903.5,731.6 898,751"/><path d="M898,751 Q918.1,750.8 915.9,744.5 Q913.6,738.3 898,751"/></g><path d="M892 752 Q882 760 890 766 Q880 772 888 778 Q880 785 886 790 M904 752 Q912 760 906 768 Q915 775 910 782 Q917 790 913 795" stroke="#4b1a12" stroke-width="1.8" fill="none"/><g fill="none" stroke="#4b1a12" stroke-width="2" stroke-linejoin="round"><path d="M889,832 Q880.0,824.6 878.7,828.2 Q877.3,831.9 889,832"/><path d="M889,832 Q885.8,820.8 882.7,823.0 Q879.5,825.2 889,832"/><path d="M889,832 Q892.9,821.0 889.0,821.0 Q885.1,821.0 889,832"/><path d="M889,832 Q898.5,825.2 895.3,823.0 Q892.2,820.8 889,832"/><path d="M889,832 Q900.7,831.9 899.3,828.2 Q898.0,824.6 889,832"/></g><g fill="none" stroke="#4b1a12" stroke-width="2" stroke-linejoin="round"><path d="M952.5,806 Q941.8,797.3 940.3,801.6 Q938.7,805.8 952.5,806"/><path d="M952.5,806 Q948.8,792.7 945.0,795.4 Q941.3,798.0 952.5,806"/><path d="M952.5,806 Q957.0,793.0 952.5,793.0 Q948.0,793.0 952.5,806"/><path d="M952.5,806 Q963.7,798.0 960.0,795.4 Q956.2,792.7 952.5,806"/><path d="M952.5,806 Q966.3,805.8 964.7,801.6 Q963.2,797.3 952.5,806"/></g><g fill="none" stroke="#4b1a12" stroke-width="2.4" stroke-linejoin="round"><path d="M1020,790 Q1005.2,777.9 1003.1,783.8 Q1000.9,789.8 1020,790"/><path d="M1020,790 Q1014.8,771.6 1009.7,775.3 Q1004.5,778.9 1020,790"/><path d="M1020,790 Q1026.3,772.0 1020.0,772.0 Q1013.7,772.0 1020,790"/><path d="M1020,790 Q1035.5,778.9 1030.3,775.3 Q1025.2,771.6 1020,790"/><path d="M1020,790 Q1039.1,789.8 1036.9,783.8 Q1034.8,777.9 1020,790"/></g><g fill="none" stroke="#4b1a12" stroke-width="2.4" stroke-linejoin="round"><path d="M1085,778 Q1072.7,767.9 1070.9,772.9 Q1069.1,777.8 1085,778"/><path d="M1085,778 Q1080.7,762.7 1076.4,765.7 Q1072.1,768.7 1085,778"/><path d="M1085,778 Q1090.2,763.0 1085.0,763.0 Q1079.8,763.0 1085,778"/><path d="M1085,778 Q1097.9,768.7 1093.6,765.7 Q1089.3,762.7 1085,778"/><path d="M1085,778 Q1100.9,777.8 1099.1,772.9 Q1097.3,767.9 1085,778"/></g><g fill="none" stroke="#4b1a12" stroke-width="2.2" stroke-linejoin="round"><path d="M1140,804 Q1126.9,793.3 1125.0,798.5 Q1123.0,803.8 1140,804"/><path d="M1140,804 Q1135.4,787.7 1130.8,790.9 Q1126.2,794.1 1140,804"/><path d="M1140,804 Q1145.6,788.0 1140.0,788.0 Q1134.4,788.0 1140,804"/><path d="M1140,804 Q1153.8,794.1 1149.2,790.9 Q1144.6,787.7 1140,804"/><path d="M1140,804 Q1157.0,803.8 1155.0,798.5 Q1153.1,793.3 1140,804"/></g><g fill="none" stroke="#4b1a12" stroke-width="2.2" stroke-linejoin="round"><path d="M1204,776 Q1191.7,765.9 1189.9,770.9 Q1188.1,775.8 1204,776"/><path d="M1204,776 Q1199.7,760.7 1195.4,763.7 Q1191.1,766.7 1204,776"/><path d="M1204,776 Q1209.2,761.0 1204.0,761.0 Q1198.8,761.0 1204,776"/><path d="M1204,776 Q1216.9,766.7 1212.6,763.7 Q1208.3,760.7 1204,776"/><path d="M1204,776 Q1219.9,775.8 1218.1,770.9 Q1216.3,765.9 1204,776"/></g></g></g><g opacity="0.55" filter="url(#bl3)"><text x="803" y="840" font-family="'Liberation Sans', sans-serif" font-weight="bold" font-size="80" fill="#f08a3c" textLength="50" lengthAdjust="spacingAndGlyphs">D</text></g><g opacity="0.32" filter="url(#bl3)"><text x="862" y="840" font-family="'Liberation Sans', sans-serif" font-size="80" fill="#f08a3c" textLength="388" lengthAdjust="spacingAndGlyphs">ownload.</text></g><path d="M1248 786 Q1249 770 1260 769.5 Q1272 772 1276 790 L1280 803 L1288 828 Q1300 790 1294 761 Q1310 740 1340 731 Q1347 733 1346 741 Q1330 770 1313 797 L1291 829 Q1287 835 1283 831 L1278 838 Q1258 820 1248 786Z" fill="#e86058" opacity="0.85" filter="url(#bl)"/></svg>
<svg class="a" style="left:0;top:0;z-index:5" width="1357" height="200" viewBox="0 0 1357 200"><rect x="27" y="12" width="16" height="16" rx="1" fill="#8b55ad"/><rect x="29" y="14" width="12" height="6" fill="#fff"/><rect x="31.3" y="22.7" width="7" height="4.5" fill="#fff"/><rect x="33.6" y="23.8" width="2.4" height="3.5" fill="#8b55ad"/><path d="M63.5 18.5 H72.5 A5.5 5.2 0 0 1 72.5 28.3 H71" fill="none" stroke="#3d78b8" stroke-width="2.8"/><path d="M61 18.5 L67.5 12.8 L68.8 14.3 L64.2 18.5 L68.8 22.7 L67.5 24.2 Z" fill="#3d78b8"/><path d="M88 17.7 L91.5 21 L95 17.7" fill="none" stroke="#262626" stroke-width="1.3"/><path d="M124.5 18.5 H115.5 A5.5 5.2 0 0 0 115.5 28.3 H117" fill="none" stroke="#aaaaaa" stroke-width="2.8"/><path d="M127 18.5 L120.5 12.8 L119.2 14.3 L123.8 18.5 L119.2 22.7 L120.5 24.2 Z" fill="#aaaaaa"/><path d="M136 17.7 L139.5 21 L143 17.7" fill="none" stroke="#b8b8b8" stroke-width="1.2"/><rect x="163" y="18.6" width="5.5" height="1.2" fill="#444"/><path d="M163 21.5 H168.5 L165.75 25 Z" fill="#444"/><path d="M1357 10 H1356 Q1353 10.5 1353 13.5 V17 Q1353 19.5 1356 20 H1357Z" fill="#d4d4d4"/><g stroke="#d4d4d4" stroke-linecap="round" stroke-linejoin="round" fill="none"><path d="M1292.5 46 Q1292 34 1299.5 33.6 Q1305.5 34 1305.5 46.5 Q1299 47.5 1292.5 46Z" fill="#d4d4d4" stroke="none"/><path d="M1294.5 45.5 Q1295 38 1299.5 37.8 Q1303.5 38.5 1303.5 46 Q1299 46.6 1294.5 45.5Z" fill="#e4e4e4" stroke="none"/><path d="M1293.5 38.5 L1285.5 39.8 M1293 41.5 L1286.5 43 M1305 43 L1308.5 43 L1312 47.3 M1304.5 45.3 L1307.6 45.8 L1309.4 49" stroke-width="1.4"/><path d="M1294.3 37.8 L1292.6 33.3 M1305.4 40.4 L1309 37.8" stroke-width="1.3"/><path d="M1291.5 33.3 Q1288.8 30 1290.2 25 Q1292.5 26 1292.3 28.5 Q1294.3 29.5 1294 33 Z" fill="#d4d4d4" stroke-width="0.8"/><path d="M1308.5 38 Q1314.5 37.5 1314.8 31.3 Q1312.5 32 1311.8 33.5 Q1309.5 33.5 1308.6 36 Z" fill="#d4d4d4" stroke-width="0.8"/><circle cx="1298.8" cy="30.6" r="1.4" stroke-width="0.9"/><circle cx="1305.4" cy="32.4" r="1.4" stroke-width="0.9"/></g><g stroke="#7a7a7a" stroke-width="1" fill="#fff"><path d="M25.5 90.5 H38.5 L45.5 97.5 V117.5 H25.5 Z"/></g><rect x="27" y="92" width="9.5" height="4.5" fill="#e8c070"/><rect x="27" y="98.5" width="10" height="5" fill="#e8c070"/><g stroke="#bdbdbd" stroke-width="0.8"><line x1="27" y1="107.5" x2="40" y2="107.5"/><line x1="27" y1="110" x2="40" y2="110"/><line x1="27" y1="112.5" x2="40" y2="112.5"/></g><path d="M40.5 98.5 H53.5 L60.5 105.5 V125.5 H40.5 Z" fill="#fff" stroke="#7a7a7a" stroke-width="1"/><rect x="42" y="100" width="5" height="24" fill="#bcd0e6"/><rect x="48.2" y="100" width="3" height="5.5" fill="#bcd0e6"/><rect x="48.2" y="107" width="11" height="17" fill="#bcd0e6"/><path d="M26.5 119.5 Q27 124 33 124" fill="none" stroke="#4a86c5" stroke-width="2.4"/><path d="M32 120.5 L38.5 124 L32 127.5 Z" fill="#4a86c5"/><g stroke="#c8c8c8" stroke-width="1"><line x1="90" y1="92.5" x2="102" y2="92.5"/><line x1="90" y1="95.5" x2="102" y2="95.5"/><line x1="90" y1="98.5" x2="102" y2="98.5"/><line x1="90" y1="101.5" x2="102" y2="101.5"/><line x1="90" y1="106.5" x2="123" y2="106.5"/><line x1="90" y1="109.5" x2="123" y2="109.5"/><line x1="90" y1="112.5" x2="118" y2="112.5"/><line x1="90" y1="115.5" x2="123" y2="115.5"/><line x1="90" y1="119.5" x2="123" y2="119.5"/><line x1="90" y1="123.5" x2="123" y2="123.5"/></g><path d="M121.5 95.5 L102 115 L99 119.5 L103.5 116.5 L123 97" stroke="#b4b4b4" stroke-width="3" fill="none"/><path d="M120.5 94 L123.7 90.8 L126 93 L122.8 96.3Z" fill="#b4b4b4"/><rect x="170.5" y="91.5" width="26" height="33" fill="#fff" stroke="#7a7a7a"/><g stroke="#4a86c5" stroke-width="1"><line x1="176.5" y1="92" x2="176.5" y2="124"/><line x1="190.5" y1="92" x2="190.5" y2="124"/><line x1="171" y1="97.5" x2="196" y2="97.5"/><line x1="171" y1="118.5" x2="196" y2="118.5"/></g><path d="M240.5 119.5 H234.5 V90.5 H248.5 L256.5 98.5 V104" fill="#fff" stroke="#7a7a7a"/><path d="M248.5 90.5 V98.5 H256.5" fill="none" stroke="#7a7a7a"/><path d="M240.5 104.5 H261.5 L269.5 112.5 V126.5 H240.5 Z" fill="#fff" stroke="#7a7a7a"/><path d="M261.5 104.5 V112.5 H269.5" fill="none" stroke="#7a7a7a"/><path d="M258.5 90 Q266 90 266 97" fill="none" stroke="#4a86c5" stroke-width="2.5"/><path d="M261.8 96.5 H270 L266 102.8Z" fill="#4a86c5"/><path d="M309.5 97.5 H324.5 L332.5 105.5 V125.5 H309.5 Z" fill="#fff" stroke="#7a7a7a"/><path d="M324.5 97.5 V105.5 H332.5" fill="none" stroke="#7a7a7a"/><g stroke="#4a86c5" stroke-width="1"><line x1="309" y1="92.5" x2="333" y2="92.5"/><line x1="309.5" y1="90" x2="309.5" y2="95"/><line x1="332.5" y1="90" x2="332.5" y2="95"/><line x1="304.5" y1="97" x2="304.5" y2="126"/><line x1="302" y1="97.5" x2="307" y2="97.5"/><line x1="302" y1="125.5" x2="307" y2="125.5"/></g><rect x="376.5" y="91.5" width="26" height="33" fill="#fff" stroke="#7a7a7a"/><g stroke="#8cc4b4" stroke-width="1"><line x1="380.5" y1="92" x2="380.5" y2="124"/><line x1="377" y1="96.5" x2="402" y2="96.5"/></g><path d="M179.2 158 L182.5 161.2 L185.8 158" fill="none" stroke="#262626" stroke-width="1.2"/><path d="M248.0 158 L251.3 161.2 L254.60000000000002 158" fill="none" stroke="#262626" stroke-width="1.2"/><path d="M314.3 158 L317.6 161.2 L320.90000000000003 158" fill="none" stroke="#262626" stroke-width="1.2"/><path d="M386.0 158 L389.3 161.2 L392.6 158" fill="none" stroke="#262626" stroke-width="1.2"/><path d="M340 188.5 V180.8 H347.7" fill="none" stroke="#262626" stroke-width="1"/><path d="M343.5 184.5 L348 189 M344.5 189.2 H348.5 V185" fill="none" stroke="#262626" stroke-width="1"/><rect x="431.5" y="119.5" width="15" height="15" fill="#fff" stroke="#555"/><path d="M435 127.0 L438 130.0 L443.5 124.0" fill="none" stroke="#262626" stroke-width="1.2"/><rect x="431.5" y="148.5" width="15" height="15" fill="#fff" stroke="#555"/><path d="M435 156.0 L438 159.0 L443.5 153.0" fill="none" stroke="#262626" stroke-width="1.2"/><path d="M539.5 106.5 V89.5 H549 L553.5 94 V100" fill="#fff" stroke="#666"/><path d="M549 89.5 V94 H553.5" fill="none" stroke="#666"/><path d="M539.5 106.5 H543" stroke="#666"/><path d="M545.5 100 L555.5 108 M555.5 100 L545.5 108" stroke="#e04a2a" stroke-width="2"/><path d="M539.5 135.5 V118.5 H549 L553.5 123 V126" fill="#fff" stroke="#bdbdbd"/><path d="M549 118.5 V123 H553.5" fill="none" stroke="#bdbdbd"/><path d="M545 126 V134 M542 131 L545 135 L548 131 M551 136 V126 M548 129 L551 125 L554 129" fill="none" stroke="#bdbdbd" stroke-width="1.5"/><path d="M539.5 164.5 V147.5 H549 L553.5 152 V164.5 Z" fill="#fff" stroke="#666"/><path d="M549 147.5 V152 H553.5" fill="none" stroke="#666"/><path d="M536 147 H540 M538 147 V156 M536 156 H540" stroke="#333" stroke-width="1"/><line x1="541" y1="152.5" x2="546" y2="152.5" stroke="#4a86c5" stroke-width="1.2"/><rect x="546.5" y="155.5" width="4" height="4" fill="none" stroke="#e8a040"/><line x1="541" y1="161.5" x2="551" y2="161.5" stroke="#e8a040"/></svg>
<svg class="a" style="left:0;top:0;z-index:6" width="175" height="480" viewBox="0 0 175 480"><path d="M9 260 L18 251 L18 260Z" fill="#444"/><rect x="18" y="271" width="138" height="196" fill="#9ccbc5"/><rect x="21.5" y="274.5" width="131" height="171" fill="#fff" stroke="#a6a6a6"/><svg x="22" y="275" width="130" height="170" viewBox="793 236 518 684" preserveAspectRatio="none"><use href="#art"/></svg><rect x="3.2" y="76.2" width="85.5" height="103.3" fill="none" stroke="#e0201c" stroke-width="2.5"/></svg>
<div class="a" style="left:76px;top:447px;width:20px;text-align:center;font-size:14.5px;font-weight:bold;color:#333;z-index:7">1</div>
</body></html>
